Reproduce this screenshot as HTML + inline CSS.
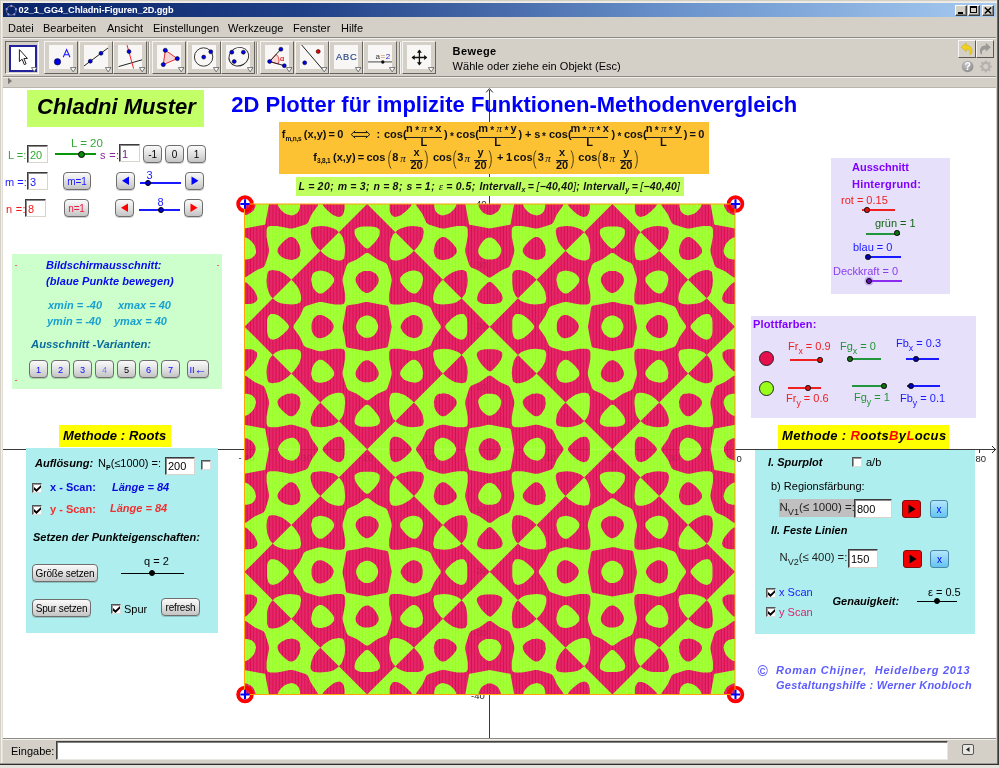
<!DOCTYPE html>
<html><head><meta charset="utf-8"><title>02_1_GG4_Chladni-Figuren_2D.ggb</title>
<style>
*{box-sizing:border-box;margin:0;padding:0}
html,body{width:999px;height:768px;overflow:hidden;background:#d4d0c8}
body{font-family:"Liberation Sans",sans-serif;font-size:11px;color:#000;position:relative}
.a{position:absolute;white-space:nowrap;line-height:1}
.bi{font-weight:bold;font-style:italic}
.b{font-weight:bold}
sub{font-size:80%;vertical-align:baseline;position:relative;top:3.5px;line-height:0}
/* window chrome */
#title{left:3px;top:3px;width:993px;height:14px;background:linear-gradient(90deg,#0a246a 0%,#1f3f86 30%,#6f97cf 70%,#a6caf0 100%)}
#title .t{left:15.6px;top:1.9px;color:#fff;font:bold 9.2px "Liberation Sans",sans-serif;letter-spacing:-.06px}
.wb{top:5px;width:12px;height:11px;background:#d4d0c8;border:1px solid;border-color:#fff #404040 #404040 #fff;box-shadow:inset -1px -1px 0 #808080}
#menu span{position:absolute;top:0;font-size:11px;line-height:1}
.tbtn{top:41px;width:34px;height:33px;border:1px solid;border-color:#f4f2ee #8a8780 #8a8780 #f4f2ee;background:#d4d0c8}
.tbtn i{position:absolute;left:4px;top:4px;width:24px;height:23px;background:#f6f5f3;display:block}
.tbtn svg{position:absolute;left:0;top:0}
.tbtn b{position:absolute;right:2px;bottom:2px;width:0;height:0;border-left:3.5px solid transparent;border-right:3.5px solid transparent;border-top:5px solid #fff;filter:drop-shadow(0 0 .6px #333) drop-shadow(0 0 .3px #333)}
/* canvas */
#cv{left:3px;top:88px;width:993px;height:650px;background:#fff;overflow:hidden}
#cv .a{ }
/* geogebra widgets */
.btn{border:1px solid #6e6e6e;border-radius:4px;background:linear-gradient(#fafafa 0%,#e4e4e4 45%,#c4c4c4 100%);text-align:center;font-size:10px;letter-spacing:-.15px;box-shadow:0 1px 0 rgba(0,0,0,.18)}
.inp{background:#fff;border:1px solid;border-color:#3c3c3c #d8d4cc #d8d4cc #3c3c3c;box-shadow:inset 1px 1px 0 #8a8a8a;font-size:11px;padding:4px 0 0 2px}
.cb{width:10px;height:10px;background:#fff;border:1px solid;border-color:#555 #ddd #ddd #555;box-shadow:inset 1px 1px 0 #999}
.cb.on:after{content:"";position:absolute;left:1px;top:1px;width:7px;height:7px;background:#000;clip-path:polygon(0% 30%,0% 68%,36% 100%,100% 34%,100% 0%,36% 62%)}
.sl{height:2px}
.dot{width:6px;height:6px;border-radius:50%;border:1px solid #000}
#w{position:absolute;left:0;top:0;width:999px;height:768px;will-change:transform}
</style></head><body><div id="w">

<!-- ===== window chrome ===== -->
<div class="a" style="left:1px;top:1px;width:996px;height:1px;background:#ebe8e0"></div><div class="a" style="left:1px;top:2px;width:996px;height:1px;background:#f1eee7"></div>
<div class="a" style="left:1px;top:1px;width:1px;height:762px;background:#f3f0e9"></div><div class="a" style="left:2px;top:2px;width:1px;height:761px;background:#e2dfd7"></div>
<div class="a" style="left:997px;top:0;width:1px;height:765px;background:#6a6864"></div>
<div class="a" style="left:998px;top:0;width:1px;height:765px;background:#3a3a3a"></div>
<div class="a" style="left:0;top:763px;width:997px;height:1px;background:#a09d97"></div>
<div class="a" style="left:0;top:764px;width:999px;height:1px;background:#2e2e2e"></div>
<div class="a" style="left:0;top:765px;width:999px;height:3px;background:#e6e3de"></div>

<div class="a" id="title">
  <svg class="a" style="left:2px;top:1px" width="13" height="13" viewBox="0 0 13 13"><ellipse cx="6.3" cy="6.5" rx="4.9" ry="4.6" fill="none" stroke="#777" stroke-width=".9"/><g fill="#9a9af0"><circle cx="6.3" cy="1.8" r="1.1"/><circle cx="1.7" cy="5.2" r="1.1"/><circle cx="10.9" cy="5.2" r="1.1"/><circle cx="3.4" cy="10.4" r="1.1"/><circle cx="9.3" cy="10.4" r="1.1"/></g></svg>
  <div class="a t">02_1_GG4_Chladni-Figuren_2D.ggb</div>
</div>
<div class="a wb" style="left:955px"><div class="a" style="left:2px;top:6px;width:5px;height:2px;background:#000"></div></div>
<div class="a wb" style="left:968px"><div class="a" style="left:1px;top:0px;width:7px;height:7px;border:1px solid #000;border-top-width:2px"></div></div>
<div class="a wb" style="left:982px"><svg class="a" style="left:1px;top:1px" width="8" height="7" viewBox="0 0 8 7"><path d="M.8 .5L7.2 6.5M7.2 .5L.8 6.5" stroke="#000" stroke-width="1.5"/></svg></div>


<!-- menu -->
<div class="a" id="menu" style="left:0;top:23px;width:999px;height:12px">
<span style="left:8px">Datei</span><span style="left:43px">Bearbeiten</span><span style="left:107px">Ansicht</span><span style="left:153px">Einstellungen</span><span style="left:228px">Werkzeuge</span><span style="left:293px">Fenster</span><span style="left:341px">Hilfe</span>
</div>
<div class="a" style="left:3px;top:37px;width:993px;height:1px;background:#8e8b85"></div>
<div class="a" style="left:3px;top:38px;width:993px;height:1px;background:#f0eeea"></div>

<div class="a" style="left:5px;top:41px;width:34px;height:33px;border:1px solid;border-color:#6a6862 #fbfaf8 #fbfaf8 #6a6862;background:#d4d0c8"><div class="a" style="left:3px;top:3px;width:28px;height:27px;border:2px solid #22229c;background:#fff"></div></div>
<svg class="a" style="left:5px;top:41px" width="34" height="33" viewBox="5 41 34 33"><path d="M19.4 49.6V61.6L22.1 59.2L24.3 64.6L26.1 63.8L23.9 58.6L27.4 58.4z" fill="#fff" stroke="#222" stroke-width="1" stroke-linejoin="miter"/><path d="M31.4 67.6h5.6l-2.8 4.2z" fill="#fff" stroke="#555" stroke-width=".8"/></svg>
<div class="a" style="left:44px;top:41px;width:34px;height:33px;border:1px solid;border-color:#f6f4f0 #66645e #66645e #f6f4f0;background:#d4d0c8"><div class="a" style="left:4px;top:3px;width:24px;height:24px;background:#f8f7f5"></div></div>
<svg class="a" style="left:44px;top:41px" width="34" height="33" viewBox="44 41 34 33"><circle cx="57.5" cy="61.8" r="3.2" fill="#0000e6" stroke="#000" stroke-width=".5"/><path d="M63.2 57.3L66.6 49.6L70 57.3M64.3 54.8H68.9" fill="none" stroke="#1a1aff" stroke-width="1.1"/><path d="M70.4 67.6h5.6l-2.8 4.2z" fill="#fff" stroke="#555" stroke-width=".8"/></svg>
<div class="a" style="left:79px;top:41px;width:34px;height:33px;border:1px solid;border-color:#f6f4f0 #66645e #66645e #f6f4f0;background:#d4d0c8"><div class="a" style="left:4px;top:3px;width:24px;height:24px;background:#f8f7f5"></div></div>
<svg class="a" style="left:79px;top:41px" width="34" height="33" viewBox="79 41 34 33"><path d="M84 66L108 48" stroke="#222" stroke-width="1"/><circle cx="90.3" cy="61.2" r="2" fill="#0000e6" stroke="#000" stroke-width=".5"/><circle cx="101" cy="53.3" r="2" fill="#0000e6" stroke="#000" stroke-width=".5"/><path d="M105.4 67.6h5.6l-2.8 4.2z" fill="#fff" stroke="#555" stroke-width=".8"/></svg>
<div class="a" style="left:113px;top:41px;width:34px;height:33px;border:1px solid;border-color:#f6f4f0 #66645e #66645e #f6f4f0;background:#d4d0c8"><div class="a" style="left:4px;top:3px;width:24px;height:24px;background:#f8f7f5"></div></div>
<svg class="a" style="left:113px;top:41px" width="34" height="33" viewBox="113 41 34 33"><path d="M118.6 66.6L142 59.8" stroke="#222" stroke-width="1"/><path d="M127 45L133.6 68.6" stroke="#f22" stroke-width="1"/><circle cx="129" cy="51.6" r="2" fill="#0000e6" stroke="#000" stroke-width=".5"/><path d="M139.4 67.6h5.6l-2.8 4.2z" fill="#fff" stroke="#555" stroke-width=".8"/></svg>
<div class="a" style="left:148px;top:42px;width:1px;height:32px;background:#8e8b85"></div><div class="a" style="left:149px;top:42px;width:1px;height:32px;background:#f6f4f0"></div>
<div class="a" style="left:152px;top:41px;width:34px;height:33px;border:1px solid;border-color:#f6f4f0 #66645e #66645e #f6f4f0;background:#d4d0c8"><div class="a" style="left:4px;top:3px;width:24px;height:24px;background:#f8f7f5"></div></div>
<svg class="a" style="left:152px;top:41px" width="34" height="33" viewBox="152 41 34 33"><path d="M165.3 50.3L177.3 58.6L163.3 64.6z" fill="#f6d6d6" stroke="#e03030" stroke-width="1"/><circle cx="165.3" cy="50.3" r="2.1" fill="#0000e6" stroke="#000" stroke-width=".5"/><circle cx="177.3" cy="58.6" r="2.1" fill="#0000e6" stroke="#000" stroke-width=".5"/><circle cx="163.3" cy="64.6" r="2.1" fill="#0000e6" stroke="#000" stroke-width=".5"/><path d="M178.4 67.6h5.6l-2.8 4.2z" fill="#fff" stroke="#555" stroke-width=".8"/></svg>
<div class="a" style="left:187px;top:41px;width:34px;height:33px;border:1px solid;border-color:#f6f4f0 #66645e #66645e #f6f4f0;background:#d4d0c8"><div class="a" style="left:4px;top:3px;width:24px;height:24px;background:#f8f7f5"></div></div>
<svg class="a" style="left:187px;top:41px" width="34" height="33" viewBox="187 41 34 33"><circle cx="203.6" cy="57" r="9.2" fill="none" stroke="#222" stroke-width=".9"/><circle cx="203.7" cy="57.1" r="2" fill="#0000e6" stroke="#000" stroke-width=".5"/><circle cx="210.8" cy="51.8" r="2" fill="#0000e6" stroke="#000" stroke-width=".5"/><path d="M213.4 67.6h5.6l-2.8 4.2z" fill="#fff" stroke="#555" stroke-width=".8"/></svg>
<div class="a" style="left:221px;top:41px;width:34px;height:33px;border:1px solid;border-color:#f6f4f0 #66645e #66645e #f6f4f0;background:#d4d0c8"><div class="a" style="left:4px;top:3px;width:24px;height:24px;background:#f8f7f5"></div></div>
<svg class="a" style="left:221px;top:41px" width="34" height="33" viewBox="221 41 34 33"><ellipse cx="238.8" cy="56.7" rx="10.2" ry="9" transform="rotate(-30 238.8 56.7)" fill="none" stroke="#222" stroke-width=".9"/><circle cx="231.8" cy="52.2" r="2" fill="#0000e6" stroke="#000" stroke-width=".5"/><circle cx="243.4" cy="52.2" r="2" fill="#0000e6" stroke="#000" stroke-width=".5"/><circle cx="234.2" cy="61.5" r="2" fill="#0000e6" stroke="#000" stroke-width=".5"/><path d="M247.4 67.6h5.6l-2.8 4.2z" fill="#fff" stroke="#555" stroke-width=".8"/></svg>
<div class="a" style="left:256px;top:42px;width:1px;height:32px;background:#8e8b85"></div><div class="a" style="left:257px;top:42px;width:1px;height:32px;background:#f6f4f0"></div>
<div class="a" style="left:260px;top:41px;width:34px;height:33px;border:1px solid;border-color:#f6f4f0 #66645e #66645e #f6f4f0;background:#d4d0c8"><div class="a" style="left:4px;top:3px;width:24px;height:24px;background:#f8f7f5"></div></div>
<svg class="a" style="left:260px;top:41px" width="34" height="33" viewBox="260 41 34 33"><path d="M269.6 61.5L276.2 54.2A9 9 0 0 1 278.2 64z" fill="#f8d8d8" stroke="#e03030" stroke-width=".9"/><path d="M280.9 49.2L269.6 61.5L284.3 65.7" fill="none" stroke="#222" stroke-width="1"/><circle cx="280.9" cy="49.2" r="2" fill="#0000e6" stroke="#000" stroke-width=".5"/><circle cx="269.6" cy="61.5" r="2" fill="#0000e6" stroke="#000" stroke-width=".5"/><circle cx="284.3" cy="65.7" r="2" fill="#0000e6" stroke="#000" stroke-width=".5"/><text x="280" y="60.5" font-family="Liberation Sans" font-size="7.5" fill="#e02020" stroke="#e02020" stroke-width=".2">&#945;</text><path d="M286.4 67.6h5.6l-2.8 4.2z" fill="#fff" stroke="#555" stroke-width=".8"/></svg>
<div class="a" style="left:295px;top:41px;width:34px;height:33px;border:1px solid;border-color:#f6f4f0 #66645e #66645e #f6f4f0;background:#d4d0c8"><div class="a" style="left:4px;top:3px;width:24px;height:24px;background:#f8f7f5"></div></div>
<svg class="a" style="left:295px;top:41px" width="34" height="33" viewBox="295 41 34 33"><path d="M301.7 45L322.3 69" stroke="#222" stroke-width="1"/><circle cx="318.2" cy="51.5" r="2" fill="#e60000" stroke="#000" stroke-width=".5"/><circle cx="304.7" cy="62.8" r="2" fill="#0000e6" stroke="#000" stroke-width=".5"/><path d="M321.4 67.6h5.6l-2.8 4.2z" fill="#fff" stroke="#555" stroke-width=".8"/></svg>
<div class="a" style="left:329px;top:41px;width:34px;height:33px;border:1px solid;border-color:#f6f4f0 #66645e #66645e #f6f4f0;background:#d4d0c8"><div class="a" style="left:4px;top:3px;width:24px;height:24px;background:#f8f7f5"></div></div>
<svg class="a" style="left:329px;top:41px" width="34" height="33" viewBox="329 41 34 33"><text x="336" y="60.1" font-family="Liberation Sans" font-size="9.3" letter-spacing=".8" fill="#2f4c86" stroke="#2f4c86" stroke-width=".2">ABC</text><path d="M355.4 67.6h5.6l-2.8 4.2z" fill="#fff" stroke="#555" stroke-width=".8"/></svg>
<div class="a" style="left:363px;top:41px;width:34px;height:33px;border:1px solid;border-color:#f6f4f0 #66645e #66645e #f6f4f0;background:#d4d0c8"><div class="a" style="left:4px;top:3px;width:24px;height:24px;background:#f8f7f5"></div></div>
<svg class="a" style="left:363px;top:41px" width="34" height="33" viewBox="363 41 34 33"><text x="375.5" y="59.2" font-family="Liberation Sans" font-size="8" letter-spacing=".5" fill="#333">a<tspan fill="#c08020">=</tspan><tspan fill="#1a1acc">2</tspan></text><path d="M368 61.9H392" stroke="#666" stroke-width="1.2"/><circle cx="382.8" cy="62" r="1.7" fill="#111"/><path d="M389.4 67.6h5.6l-2.8 4.2z" fill="#fff" stroke="#555" stroke-width=".8"/></svg>
<div class="a" style="left:399px;top:42px;width:1px;height:32px;background:#8e8b85"></div><div class="a" style="left:400px;top:42px;width:1px;height:32px;background:#f6f4f0"></div>
<div class="a" style="left:402px;top:41px;width:34px;height:33px;border:1px solid;border-color:#f6f4f0 #66645e #66645e #f6f4f0;background:#d4d0c8"><div class="a" style="left:4px;top:3px;width:24px;height:24px;background:#f8f7f5"></div></div>
<svg class="a" style="left:402px;top:41px" width="34" height="33" viewBox="402 41 34 33"><path d="M412.5 57.5H426.3M419.4 50.6V64.4" stroke="#111" stroke-width="1.3"/><path d="M419.4 49.6L416.9 52.8H421.9zM419.4 65.4L416.9 62.2H421.9zM411.5 57.5L414.7 55V60zM427.3 57.5L424.1 55V60z" fill="#111"/><path d="M428.4 67.6h5.6l-2.8 4.2z" fill="#fff" stroke="#555" stroke-width=".8"/></svg>
<div class="a b" style="left:452.6px;top:46px;font-size:11px;letter-spacing:.4px">Bewege</div>
<div class="a" style="left:452.6px;top:61px;font-size:11px;letter-spacing:.04px">Wähle oder ziehe ein Objekt (Esc)</div>
<div class="a" style="left:958px;top:40px;width:18px;height:18px;border:1px solid;border-color:#f8f6f2 #5a5852 #5a5852 #f8f6f2;background:#d4d0c8"><svg class="a" style="left:1px;top:1px" width="14" height="14" viewBox="0 0 14 14"><path d="M1.2 5.2L6.2 .8V3.6C10.5 3.4 12.4 6.2 12 10.6C11.8 11.8 10.6 12.6 9.6 12.4C10.6 10.6 10.2 7.2 6.2 7.2V9.8z" fill="#f2d21c" stroke="#c8a800" stroke-width=".5"/></svg></div>
<div class="a" style="left:976px;top:40px;width:18px;height:18px;border:1px solid;border-color:#f8f6f2 #5a5852 #5a5852 #f8f6f2;background:#d4d0c8"><svg class="a" style="left:1px;top:1px" width="14" height="14" viewBox="0 0 14 14"><path d="M12.8 5.2L7.8 .8V3.6C3.5 3.4 1.6 6.2 2 10.6C2.2 11.8 3.4 12.6 4.4 12.4C3.4 10.6 3.8 7.2 7.8 7.2V9.8z" fill="#9c9a96"/></svg></div>
<svg class="a" style="left:960px;top:59px" width="34" height="15" viewBox="960 59 34 15"><defs><radialGradient id="hg" cx=".4" cy=".35" r=".7"><stop offset="0" stop-color="#c8c8c8"/><stop offset="1" stop-color="#8a8a8a"/></radialGradient></defs><circle cx="967.6" cy="66.5" r="5.8" fill="url(#hg)"/><text x="964.6" y="70.3" font-family="Liberation Sans" font-size="10.5" font-weight="bold" fill="#fff">?</text><g transform="translate(985.8 66.5)" fill="none" stroke="#b4b2ae"><circle r="3.6" stroke-width="2.2"/><path d="M0-6V-4M0 4V6M-6 0H-4M4 0H6M-4.3-4.3L-2.9-2.9M4.3 4.3L2.9 2.9M-4.3 4.3L-2.9 2.9M4.3-4.3L2.9-2.9" stroke-width="2"/></g></svg>
<div class="a" style="left:3px;top:76px;width:993px;height:1px;background:#8e8b85"></div><div class="a" style="left:3px;top:77px;width:993px;height:1px;background:#f0eeea"></div>
<svg class="a" style="left:7px;top:77.3px" width="6" height="8" viewBox="0 0 6 8"><path d="M1 .8V7.2L5 4z" fill="#777"/></svg>
<div class="a" style="left:3px;top:87px;width:993px;height:1px;background:#b8b5ae"></div>


<!-- ===== canvas ===== -->
<div class="a" id="cv">
<div class="a" style="left:-3px;top:-88px;width:999px;height:768px">

<!-- axes -->
<div class="a" style="left:3px;top:449px;width:993px;height:1px;background:#3a3a3a"></div>
<div class="a" style="left:489px;top:90px;width:1px;height:648px;background:#3a3a3a"></div>
<svg class="a" style="left:484px;top:88px" width="11" height="8" viewBox="0 0 11 8"><path d="M2.2 4.4L5.5 .6L8.8 4.4" fill="none" stroke="#222" stroke-width="1"/></svg>
<svg class="a" style="left:988px;top:444px" width="8" height="11" viewBox="0 0 8 11"><path d="M4 2L7.6 5.5L4 9" fill="none" stroke="#222" stroke-width="1"/></svg><div class="a" style="left:979px;top:450px;width:1px;height:3px;background:#333"></div>
<div class="a" style="left:975.5px;top:454px;font-size:9.5px;color:#222">80</div>
<div class="a" style="left:736.5px;top:454px;font-size:9.5px;color:#222">0</div>
<div class="a" style="left:238.5px;top:453px;font-size:9.5px;color:#222">-</div>
<div class="a" style="left:476px;top:198.5px;font-size:9.5px;color:#222">40</div>
<div class="a" style="left:471px;top:690.5px;font-size:9.5px;color:#222">-40</div>

<!-- title -->
<div class="a" style="left:27px;top:90px;width:177px;height:37px;background:#c3ff66"></div>
<div class="a bi" style="left:37px;top:96px;font-size:22px">Chladni Muster</div>
<div class="a b" style="left:231.3px;top:94px;font-size:22px;color:#0000f8">2D Plotter für implizite Funktionen-Methodenvergleich</div>

<div class="a" style="left:279px;top:122px;width:430px;height:52px;background:#fdc233"></div>
<div class="a" style="left:296px;top:177px;width:388px;height:19px;background:#bfff60"></div>
<div class="b" style="color:#111">
<div class="a" style="left:281.8px;top:129.1px;font-size:11px;">f</div>
<div class="a" style="left:285.5px;top:135.5px;font-size:6.5px;letter-spacing:-.2px">m,n,s</div>
<div class="a" style="left:303.8px;top:129.1px;font-size:11px;">(x,y)&#8201;=&#8201;0</div>
<svg class="a" style="left:350px;top:130px" width="21" height="9" viewBox="0 0 21 9"><path d="M4 2.6H17M4 6.4H17M5.2 .8L1.2 4.5L5.2 8.2M15.8 .8L19.8 4.5L15.8 8.2" fill="none" stroke="#111" stroke-width="1"/></svg>
<div class="a" style="left:376.5px;top:129.1px;font-size:11px;">:</div>
<div class="a" style="left:384.0px;top:129.1px;font-size:11px;">cos(</div>
<div class="a" style="left:393.8px;width:60px;text-align:center;top:121.9px;font-size:11px;">n<span style="font-size:10px;position:relative;top:2px;margin:0 2.3px">*</span><span style="font:italic 11px 'Liberation Serif',serif">&#960;</span><span style="font-size:10px;position:relative;top:2px;margin:0 2.3px">*</span>x</div>
<div class="a" style="left:405.3px;top:137.4px;width:37.0px;height:1px;background:#222"></div>
<div class="a" style="left:393.8px;width:60px;text-align:center;top:136.5px;font-size:11px;">L</div>
<div class="a" style="left:444.0px;top:129.1px;font-size:11px;">)</div>
<div class="a" style="left:450.0px;top:132.4px;font-size:10px;">*</div>
<div class="a" style="left:456.3px;top:129.1px;font-size:11px;">cos(</div>
<div class="a" style="left:467.5px;width:60px;text-align:center;top:121.9px;font-size:11px;">m<span style="font-size:10px;position:relative;top:2px;margin:0 2.3px">*</span><span style="font:italic 11px 'Liberation Serif',serif">&#960;</span><span style="font-size:10px;position:relative;top:2px;margin:0 2.3px">*</span>y</div>
<div class="a" style="left:479.0px;top:137.4px;width:37.0px;height:1px;background:#222"></div>
<div class="a" style="left:467.5px;width:60px;text-align:center;top:136.5px;font-size:11px;">L</div>
<div class="a" style="left:518.6px;top:129.1px;font-size:11px;">)</div>
<div class="a" style="left:525.0px;top:129.1px;font-size:11px;">+</div>
<div class="a" style="left:534.3px;top:129.1px;font-size:11px;">s</div>
<div class="a" style="left:542.0px;top:132.4px;font-size:10px;">*</div>
<div class="a" style="left:549.0px;top:129.1px;font-size:11px;">cos(</div>
<div class="a" style="left:559.7px;width:60px;text-align:center;top:121.9px;font-size:11px;">m<span style="font-size:10px;position:relative;top:2px;margin:0 2.3px">*</span><span style="font:italic 11px 'Liberation Serif',serif">&#960;</span><span style="font-size:10px;position:relative;top:2px;margin:0 2.3px">*</span>x</div>
<div class="a" style="left:571.2px;top:137.4px;width:37.0px;height:1px;background:#222"></div>
<div class="a" style="left:559.7px;width:60px;text-align:center;top:136.5px;font-size:11px;">L</div>
<div class="a" style="left:611.5px;top:129.1px;font-size:11px;">)</div>
<div class="a" style="left:617.5px;top:132.4px;font-size:10px;">*</div>
<div class="a" style="left:624.0px;top:129.1px;font-size:11px;">cos(</div>
<div class="a" style="left:633.4px;width:60px;text-align:center;top:121.9px;font-size:11px;">n<span style="font-size:10px;position:relative;top:2px;margin:0 2.3px">*</span><span style="font:italic 11px 'Liberation Serif',serif">&#960;</span><span style="font-size:10px;position:relative;top:2px;margin:0 2.3px">*</span>y</div>
<div class="a" style="left:644.9px;top:137.4px;width:37.0px;height:1px;background:#222"></div>
<div class="a" style="left:633.4px;width:60px;text-align:center;top:136.5px;font-size:11px;">L</div>
<div class="a" style="left:683.7px;top:129.1px;font-size:11px;">)&#8201;=&#8201;0</div>
<div class="a" style="left:313.3px;top:151.5px;font-size:11px;">f</div>
<div class="a" style="left:317.0px;top:157.9px;font-size:6.5px;letter-spacing:-.2px">3,8,1</div>
<div class="a" style="left:333.0px;top:151.5px;font-size:11px;">(x,y)&#8201;=&#8201;cos</div>
<svg class="a" style="left:386.5px;top:150px" width="5" height="19" viewBox="0 0 5 19"><path d="M4 .5C1 5 1 14 4 18.5" fill="none" stroke="#4a3a10" stroke-width="1"/></svg>
<div class="a" style="left:392.3px;top:151.5px;font-size:11px;">8</div>
<div class="a" style="left:400.3px;top:151.5px;font-size:11px;"><span style="font:italic 11px 'Liberation Serif',serif">&#960;</span></div>
<div class="a" style="left:386.5px;width:60px;text-align:center;top:146.7px;font-size:11px;">x</div>
<div class="a" style="left:410.3px;top:159.6px;width:12.4px;height:1px;background:#222"></div>
<div class="a" style="left:386.5px;width:60px;text-align:center;top:159.9px;font-size:11px;">20</div>
<svg class="a" style="left:423.6px;top:150px" width="5" height="19" viewBox="0 0 5 19"><path d="M1 .5C4 5 4 14 1 18.5" fill="none" stroke="#4a3a10" stroke-width="1"/></svg>
<div class="a" style="left:433.0px;top:151.5px;font-size:11px;">cos</div>
<svg class="a" style="left:452.0px;top:150px" width="5" height="19" viewBox="0 0 5 19"><path d="M4 .5C1 5 1 14 4 18.5" fill="none" stroke="#4a3a10" stroke-width="1"/></svg>
<div class="a" style="left:457.3px;top:151.5px;font-size:11px;">3</div>
<div class="a" style="left:464.5px;top:151.5px;font-size:11px;"><span style="font:italic 11px 'Liberation Serif',serif">&#960;</span></div>
<div class="a" style="left:450.6px;width:60px;text-align:center;top:146.7px;font-size:11px;">y</div>
<div class="a" style="left:474.4px;top:159.6px;width:12.4px;height:1px;background:#222"></div>
<div class="a" style="left:450.6px;width:60px;text-align:center;top:159.9px;font-size:11px;">20</div>
<svg class="a" style="left:488.4px;top:150px" width="5" height="19" viewBox="0 0 5 19"><path d="M1 .5C4 5 4 14 1 18.5" fill="none" stroke="#4a3a10" stroke-width="1"/></svg>
<div class="a" style="left:497.0px;top:151.5px;font-size:11px;">+</div>
<div class="a" style="left:506.0px;top:151.5px;font-size:11px;">1</div>
<div class="a" style="left:513.6px;top:151.5px;font-size:11px;">cos</div>
<svg class="a" style="left:532.0px;top:150px" width="5" height="19" viewBox="0 0 5 19"><path d="M4 .5C1 5 1 14 4 18.5" fill="none" stroke="#4a3a10" stroke-width="1"/></svg>
<div class="a" style="left:537.8px;top:151.5px;font-size:11px;">3</div>
<div class="a" style="left:545.2px;top:151.5px;font-size:11px;"><span style="font:italic 11px 'Liberation Serif',serif">&#960;</span></div>
<div class="a" style="left:532.0px;width:60px;text-align:center;top:146.7px;font-size:11px;">x</div>
<div class="a" style="left:555.8px;top:159.6px;width:12.4px;height:1px;background:#222"></div>
<div class="a" style="left:532.0px;width:60px;text-align:center;top:159.9px;font-size:11px;">20</div>
<svg class="a" style="left:569.6px;top:150px" width="5" height="19" viewBox="0 0 5 19"><path d="M1 .5C4 5 4 14 1 18.5" fill="none" stroke="#4a3a10" stroke-width="1"/></svg>
<div class="a" style="left:578.3px;top:151.5px;font-size:11px;">cos</div>
<svg class="a" style="left:596.6px;top:150px" width="5" height="19" viewBox="0 0 5 19"><path d="M4 .5C1 5 1 14 4 18.5" fill="none" stroke="#4a3a10" stroke-width="1"/></svg>
<div class="a" style="left:602.2px;top:151.5px;font-size:11px;">8</div>
<div class="a" style="left:609.6px;top:151.5px;font-size:11px;"><span style="font:italic 11px 'Liberation Serif',serif">&#960;</span></div>
<div class="a" style="left:596.3px;width:60px;text-align:center;top:146.7px;font-size:11px;">y</div>
<div class="a" style="left:620.1px;top:159.6px;width:12.4px;height:1px;background:#222"></div>
<div class="a" style="left:596.3px;width:60px;text-align:center;top:159.9px;font-size:11px;">20</div>
<svg class="a" style="left:634.0px;top:150px" width="5" height="19" viewBox="0 0 5 19"><path d="M1 .5C4 5 4 14 1 18.5" fill="none" stroke="#4a3a10" stroke-width="1"/></svg>
</div>
<div class="a" style="left:298.6px;top:179.5px;font-size:10.5px;font-style:italic;font-weight:bold;letter-spacing:.55px;color:#111">L&#8201;=&#8201;20; m&#8201;=&#8201;3; n&#8201;=&#8201;8; s&#8201;=&#8201;1; <span style="font:italic 11px 'Liberation Serif',serif">&#949;</span>&#8201;=&#8201;0.5; <span style="letter-spacing:.2px">Intervall<span style="font-size:7px;position:relative;top:2px">x</span>&#8201;=&#8201;<span style="font-weight:normal">[</span>&#8722;40,40<span style="font-weight:normal">]</span>; Intervall<span style="font-size:7px;position:relative;top:2px">y</span>&#8201;=&#8201;<span style="font-weight:normal">[</span>&#8722;40,40<span style="font-weight:normal">]</span></span></div>


<!-- pattern -->
<svg class="a" style="left:234px;top:193px" width="512.5" height="512.5" viewBox="-10.5 -11 512 512">
<defs><path id="pp" d="M1.5 11l-1.5 0 0-11 11 0 0 2-0.5 1.5-1 2-1 1.5-2 1.5-1.5 1-2 1zM1.5 73l-1.5 0.5 0-18 2.5 0 2-0.5 2-0.5 2-1.5 1.5-1.5 1-1.5 0.5-1.5 0-2-0.5-2-0.5-2-1-2-2-2.5-2-2-2-1.5-2-1-1.5 0 0-9 2.5-0.5 8-1.5 8-1.5 1 0 1-0.5 0.5-1 0-1 1.5-8 1.5-8 0.5-2.5 9 0 0 1.5 1 2 1.5 2 2.5 2.5 2 1.5 2.5 1 2 0.5 2 0.5 2-0.5 1.5-0.5 1.5-1 1.5-1.5 1-1.5 0.5-2 0.5-2 0-2.5 18 0 0 1-0.5 1-4 5.5-2 3-3.5 8-1 1-1.5 1-11 3.5-2.5 0.5-2.5 0-7-1.5-6-1-6.5 0-1.5 0.5-1 0.5-0.5 1-0.5 2 0 6.5 1 5.5 1.5 7 0 2.5-0.5 2.5-3.5 11-1 1.5-1 1-6 2.5-2.5 1.5zM96 12.5l-2 0.5-2-0.5-2.5-1-2.5-1.5-3.5-3-3-3-2-2.5-0.5-1.5 22 0 0 5-1 4-1 2-1 1zM152.5 12.5l-2 0.5-1.5-0.5-1.5-1-1-1-1-2-0.5-2 0-3 0-3.5 22 0-0.5 1.5-1 1.5-2 2-2.5 2.5-4.5 3.5-2 1zM246.5 73l-1.5 0.5-1 0-1-0.5-8-5.5-2.5-1.5-6-2.5-1-1-1-1.5-3.5-11-0.5-2.5 0-2.5 1.5-7 1-6 0-6.5-0.5-1.5-0.5-1-1-0.5-2-0.5-6.5 0-5.5 1-7 1.5-2.5 0-2.5-0.5-11-3.5-1.5-1-1-1-3.5-8-2-3-4-5.5-0.5-1 0-1 18 0 0 2.5 0.5 2 0.5 2 1 1.5 1.5 1.5 1.5 1 1.5 0.5 2 0.5 2-0.5 2-0.5 2.5-1 2-1.5 2.5-2.5 1.5-2 1-2 0-1.5 9 0 0.5 2.5 1.5 8 1.5 8 0 1 0.5 1 1 0.5 1 0 8 1.5 8 1.5 2.5 0.5 2.5-0.5 8-1.5 8-1.5 1 0 1-0.5 0.5-1 0-1 1.5-8 1.5-8 0.5-2.5 9 0 0 1.5 1 2 1.5 2 2.5 2.5 2 1.5 2.5 1 2 0.5 2 0.5 2-0.5 1.5-0.5 1.5-1 1.5-1.5 1-1.5 0.5-2 0.5-2 0-2.5 18 0 0 1-0.5 1-4 5.5-2 3-3.5 8-1 1-1.5 1-11 3.5-2.5 0.5-2.5 0-7-1.5-6-1-6.5 0-1.5 0.5-1 0.5-0.5 1-0.5 2 0 6.5 1 5.5 1.5 7 0 2.5-0.5 2.5-3.5 11-1 1.5-1 1-6 2.5-2.5 1.5zM246.5 11l-2 0-2.5-0.5-2-1-2-1-1.5-2-1.5-2-1-2 0-2.5 22 0 0 2-0.5 1.5-1 2-1 1.5-2 1.5-1.5 1-2 1zM341 12.5l-2 0.5-2-0.5-2.5-1-2.5-1.5-3.5-3-3-3-2-2.5-0.5-1.5 22 0 0 5-1 4-1 2-1 1zM397.5 12.5l-2 0.5-1.5-0.5-1.5-1-1-1-1-2-0.5-2 0-3 0-3.5 22 0-0.5 1.5-1 1.5-2 2-2.5 2.5-4.5 3.5-2 1zM490 73.5l-1 0-1-0.5-5.5-4-3-2-8-3.5-1-1-1-1.5-3.5-11-0.5-2.5 0-2.5 1.5-7 1-5.5 0-6.5-0.5-2-0.5-1-1-0.5-1.5-0.5-6.5 0-6 1-7 1.5-2.5 0-2.5-0.5-11-3.5-1.5-1-1-1-3.5-8-2-3-4-5.5-0.5-1 0-1 18 0 0 2.5 0.5 2 0.5 2 1 1.5 1.5 1.5 1.5 1 1.5 0.5 2 0.5 2-0.5 2-0.5 2.5-1 2-1.5 2.5-2.5 1.5-2 1-2 0-1.5 9 0 0.5 2.5 1.5 8 1.5 8 0 1 0.5 1 1 0.5 1 0 8 1.5 8 1.5 2.5 0.5 0 9-1.5 0-2 1-2 1.5-2.5 2.5-1.5 2-1 2.5-0.5 2-0.5 2 0.5 2 0.5 1.5 1 1.5 1.5 1.5 1.5 1 2 0.5 2 0.5 2.5 0zM490 11l-2 0-2-1-2-1-1.5-1-1.5-2-1-2-1-2 0-2 11 0zM368 244.5l-0.5 0.5-28-28-0.5 0-2 2-3 1.5-3 1-3.5 1-5.5 0.5-5-0.5-3-0.5-1-0.5-1-0.5-0.5-1.5-0.5-2.5 0.5-3 0.5-3.5 1.5-3 1.5-2.5 2.5-3.5 3-3 0-0.5 19 19 0-0.5 2-2 1.5-3 1-2.5 0.5-3 0.5-5 0-5 0-3.5-1-2-0.5-1-1-0.5-2-0.5-3.5 0-3.5 1-3 1-3 2-3.5 2.5-3 3-0.5 0-28.5-28.5-0.5 0-3 3-3.5 2.5-2.5 1.5-2.5 1-3 1-3 0.5-2.5 0-2-1-1-0.5-0.5-1-0.5-3-0.5-5 0.5-5.5 1-3.5 0.5-3 1.5-2.5 1.5-2 1-1 0-0.5-28-28-28 28 0 0.5 2 2 1.5 3 1 3 1 3.5 0.5 5.5-0.5 5-0.5 3-0.5 1-0.5 1-1.5 0.5-2.5 0.5-3-0.5-3.5-0.5-3-1.5-2.5-1.5-3.5-2.5-3-3-0.5 0-28.5 28.5 0 0.5 3 3 2.5 3.5 1.5 2.5 1.5 3 0.5 3.5 0.5 3-0.5 2.5-0.5 1.5-1 0.5-1 0.5-3 0.5-5 0.5-5.5-0.5-3.5-1-3-1-3-1.5-2-2-0.5 0-28 28-28-28 0-0.5 1-1 1.5-2 1.5-2.5 1-3.5 0.5-4 0.5-5.5-0.5-5-1-2.5-0.5-1-1-0.5-2-0.5-2.5 0-3 0.5-3 1-2.5 1-3 2-3 2.5-2.5 2.5-0.5 0 19 19-0.5 0-1 1-2 1.5-2.5 1.5-3 0.5-3.5 1-5.5 0.5-5-0.5-3-0.5-1-0.5-0.5-1-1-2 0-2.5 0.5-3 1-3 1-2.5 1.5-2.5 2.5-3.5 3-3 0-0.5-28.5-28.5 0-0.5 3-3 2.5-3.5 2-3 1-3 1-3.5 0-3.5-0.5-2-0.5-1-1-0.5-2-1-3.5 0-5 0-5 0.5-3 0.5-2.5 1-3 1.5-2 2-0.5 0 19 19-0.5 0-3 3-3.5 2.5-2.5 1.5-3 1.5-3.5 0.5-3 0.5-2.5-0.5-1.5-0.5-0.5-1-0.5-1-0.5-3-0.5-5 0.5-5.5 1-3.5 1-3 1.5-3 2-2 0-0.5-28-28 28-28 0.5 0 1 1 2 1.5 2.5 1.5 3.5 1 4 0.5 5.5 0.5 5-0.5 2.5-1 1-0.5 0.5-1 0.5-2 0-2.5-0.5-3-1-3-1-2.5-2-3-2.5-3-2.5-2.5 0-0.5-19 19 0-0.5-2-2-1.5-3-1-3-1-3.5-0.5-5.5 0.5-5 0.5-3 0.5-1 0.5-1 1.5-0.5 2.5-0.5 3 0.5 3.5 0.5 3 1.5 2.5 1.5 3.5 2.5 3 3 0.5 0 28.5-28.5 0.5 0 3 3 3.5 2.5 2.5 1.5 2.5 1 3 1 3 0.5 2.5 0 2-1 1-0.5 0.5-1 0.5-3 0.5-5-0.5-5.5-1-3.5-0.5-3-1.5-2.5-1.5-2-1-1 0-0.5 28-28 28 28 0.5 0 2-2 3-1.5 3-1 3.5-1 5.5-0.5 5 0.5 3 0.5 1 0.5 1 0.5 0.5 1.5 0.5 2.5-0.5 3-0.5 3.5-1.5 3-1.5 2.5-2.5 3.5-3 3 0 0.5-19-19 0 0.5-2 2-1.5 3-1 2.5-0.5 3-0.5 5 0 5 0 3.5 1 2 0.5 1 1 0.5 2 0.5 3.5 0 3.5-1 3-1 3-2 3.5-2.5 3-3 0.5 0 28.5 28.5 0.5 0 3-3 3.5-2.5 2.5-1.5 2.5-1 3-1 3-0.5 2.5 0 2 1 1 0.5 0.5 1 0.5 3 0.5 5-0.5 5.5-1 3.5-0.5 3-1.5 2.5-1.5 2-1 1 0 0.5-19-19 0 0.5-2.5 2.5-2.5 3-2 3-1 2.5-1 3-0.5 3 0 2.5 0.5 2 0.5 1 1 0.5 2.5 1 5 0.5 5.5-0.5 4-0.5 3.5-1 2.5-1.5 2-1.5 1-1 0.5 0 28 28 28-28 0.5 0 2 2 3 1.5 3 1 3.5 1 5.5 0.5 5-0.5 3-0.5 1-0.5 1-0.5 0.5-1.5 0.5-2.5-0.5-3-0.5-3.5-1.5-3-1.5-2.5-2.5-3.5-3-3 0-0.5-19 19 0-0.5-2-2-1.5-3-1-2.5-0.5-3-0.5-5 0-5 0-3.5 1-2 0.5-1 1-0.5 2-0.5 3.5 0 3.5 1 3 1 3 2 3.5 2.5 3 3 0.5 0 28.5-28.5 0.5 0 3 3 3.5 2.5 2.5 1.5 2.5 1 3 1 3 0.5 2.5 0 2-1 1-0.5 0.5-1 0.5-3 0.5-5-0.5-5.5-1-3.5-0.5-3-1.5-2.5-1.5-2-1-1 0-0.5 28-28 28 28 0 0.5-2 2-1.5 3-1 3-1 3.5-0.5 5.5 0.5 5 0.5 3 0.5 1 0.5 1 1.5 0.5 2.5 0.5 3-0.5 3.5-0.5 3-1.5 2.5-1.5 3.5-2.5 3-3 0.5 0 28.5 28.5 0.5 0 3-3 3.5-2.5 2.5-1.5 2.5-1 3-1 3-0.5 2.5 0 2 1 1 0.5 0.5 1 0.5 3 0.5 5-0.5 5.5-1 3.5-0.5 3-1.5 2.5-1.5 2-1 1 0 0.5-19-19 0 0.5-2.5 2.5-2.5 3-2 3-1 2.5-1 3-0.5 3 0 2.5 0.5 2 0.5 1 1 0.5 2.5 1 5 0.5 5.5-0.5 4-0.5 3.5-1 2.5-1.5 2-1.5 1-1 0.5 0 28 28-28 28-0.5 0-2-2-3-1.5-3-1-3.5-1-5.5-0.5-5 0.5-3 0.5-1 0.5-1 0.5-0.5 1.5-0.5 2.5 0.5 3 0.5 3.5 1.5 3 1.5 2.5 2.5 3.5 3 3 0 0.5-28.5 28.5 0 0.5 3 3 2.5 3.5 1.5 2.5 1 2.5 1 3 0.5 3 0 2.5-1 2-0.5 1-1 0.5-3 0.5-5 0.5-5.5-0.5-3.5-1-3-0.5-2.5-1.5-2-1.5-1-1-0.5 0 19-19-0.5 0-2.5-2.5-3-2.5-3-2-2.5-1-3-1-3-0.5-2.5 0-2 0.5-1 0.5-0.5 1-1 2.5-0.5 5 0.5 5.5 0.5 4 1 3.5 1.5 2.5 1.5 2 1 1 0 0.5zM75.5 47l0-0.5-3-3-2.5-3.5-1.5-2.5-1.5-3-0.5-3.5-0.5-3 0.5-2.5 0.5-1.5 1-0.5 1-0.5 3-0.5 5-0.5 5.5 0.5 3.5 1 3 1 3 1.5 2 2 0.5 0zM123 44.5l1.5-0.5 3-3 3-3 2.5-3.5 1.5-2.5 0.5-2.5 0-2 0-1.5-1.5-1.5-1.5-1-2-0.5-3-0.5-4 0-4.5 0-3.5 0.5-2.5 1-1.5 1-1 1 0 1 0 2.5 1 3 2.5 4 4 4.5 2 2 1.5 1 1 0.5zM321 46.5l-0.5 0.5 0-0.5-2-2-2.5-3-2.5-3.5-1-3-1-3.5-0.5-3 0-2.5 0.5-1 0.5-1 1-0.5 1-0.5 3-0.5 5-0.5 5.5 0.5 3.5 1 3 1 3 1.5 2 2 0.5 0zM368 44.5l1.5-0.5 3-3 3-3 2.5-3.5 1.5-2.5 0.5-2.5 0-2 0-1.5-1.5-1.5-1.5-1-2-0.5-3-0.5-4 0-4.5 0-3.5 0.5-2.5 1-1.5 1-1 1 0 1 0 2.5 1 3 2.5 4 4 4.5 2 2 1.5 1 1 0.5zM414.5 47l-19-19 0.5 0 2-2 3-1.5 3-1 3.5-1 5.5-0.5 5 0.5 3 0.5 1 0.5 1 0.5 0.5 1.5 0.5 2.5-0.5 3-0.5 3.5-1.5 3-1.5 2.5-2.5 3.5-3 3zM49.5 55.5l-2.5 0.5-3-0.5-2.5-0.5-2.5-1-2.5-1.5-1.5-1.5-1.5-2-0.5-1.5 0-1.5 0.5-2 1.5-2 1.5-2 3-3 2.5-2 2-1.5 2-0.5 1.5 0 1.5 0.5 1.5 1 1.5 1.5 1 1.5 1 2 1 2 0.5 2.5 0.5 2.5-0.5 2 0 2-0.5 1.5-1.5 1.5-1 1-1.5 0.5zM201.5 55.5l-2.5 0.5-2 0-2-0.5-2-0.5-1.5-1.5-1-1-0.5-1.5-0.5-1.5-0.5-2.5 0.5-3 0.5-2.5 1-2.5 1.5-2.5 1.5-1.5 2-1.5 1.5-0.5 1.5 0 2 0.5 2 1.5 2 1.5 3 3 2 2.5 1.5 2 0.5 2 0 1 0 1.5-1 1.5-1.5 1.5-1.5 1.5-2 1-2 1zM294.5 55.5l-2.5 0.5-3-0.5-2.5-0.5-2.5-1-2.5-1.5-1.5-1.5-1.5-2-0.5-1.5 0-1.5 0.5-2 1.5-2 1.5-2 3-3 2.5-2 2-1.5 2-0.5 1.5 0 1.5 0.5 1.5 1 1.5 1.5 1 1.5 1 2 1 2 0.5 2.5 0.5 2.5-0.5 2 0 2-0.5 1.5-1.5 1.5-1 1-1.5 0.5zM446.5 55.5l-2.5 0.5-2 0-2-0.5-2-0.5-1.5-1.5-1-1-0.5-1.5-0.5-1.5-0.5-2.5 0.5-3 0.5-2.5 1-2.5 1.5-2.5 1.5-1.5 2-1.5 1.5-0.5 1.5 0 2 0.5 2 1.5 2 1.5 3 3 2 2.5 1.5 2 0.5 2 0 1 0 1.5-1 1.5-1.5 1.5-1.5 1.5-2 1-2 1zM247.5 55.5l2-0.5 2-0.5 1.5-1 1.5-1.5 1-1.5 0.5-1.5 0.5-1.5 0-2-0.5-2-1-2-2-2.5-1.5-2-2-2-1.5-0.5-1.5-1-2 0-2 0.5-2 1-2 2-2 2.5-1.5 2.5-1 2-0.5 2 0 2 0.5 2 1 1.5 1.5 1.5 1.5 1 2 1 2.5 0.5 2.5 0zM122.5 196l1 0 1-0.5 5.5-4 3-2 8-3.5 1-1 1-1.5 3.5-11 0.5-2.5 0-2.5-1.5-7-1-5.5 0-6.5 0.5-2 0.5-1 1-0.5 1.5-0.5 6.5 0 6 1 7 1.5 2.5 0 2.5-0.5 11-3.5 1.5-1 1-1 3.5-8 2-3 4-5.5 0.5-1 0-1 0-1-0.5-1-4-5.5-2-3-3.5-8-1-1-1.5-1-11-3.5-2.5-0.5-2.5 0-7 1.5-5.5 1-6.5 0-2-0.5-1-0.5-0.5-1-0.5-1.5 0-6.5 1-6 1.5-7 0-2.5-0.5-2.5-3.5-11-1-1.5-1-1-8-3.5-3-2-5.5-4-1-0.5-1 0-1 0-1 0.5-5.5 4-3 2-8 3.5-1 1-1 1.5-3.5 11-0.5 2.5 0 2.5 1.5 7 1 5.5 0 6.5-0.5 2-0.5 1-1 0.5-1.5 0.5-6.5 0-6-1-7-1.5-2.5 0-2.5 0.5-11 3.5-1.5 1-1 1-3.5 8-2 3-4 5.5-0.5 1 0 1 0 1 0.5 1 4 5.5 2 3 3.5 8 1 1 1.5 1 11 3.5 2.5 0.5 2.5 0 7-1.5 5.5-1 6.5 0 2 0.5 1 0.5 0.5 1 0.5 1.5 0 6.5-1 6-1.5 7 0 2.5 0.5 2.5 3.5 11 1 1.5 1 1 8 3.5 3 2 5.5 4 1 0.5zM367.5 196l1 0 1-0.5 5.5-4 3-2 8-3.5 1-1 1-1.5 3.5-11 0.5-2.5 0-2.5-1.5-7-1-5.5 0-6.5 0.5-2 0.5-1 1-0.5 1.5-0.5 6.5 0 6 1 7 1.5 2.5 0 2.5-0.5 11-3.5 1.5-1 1-1 3.5-8 2-3 4-5.5 0.5-1 0-1 0-1-0.5-1-4-5.5-2-3-3.5-8-1-1-1.5-1-11-3.5-2.5-0.5-2.5 0-7 1.5-6 1-6.5 0-1.5-0.5-1-0.5-0.5-1-0.5-2 0-6.5 1-5.5 1.5-7 0-2.5-0.5-2.5-3.5-11-1-1.5-1-1-8-3.5-3-2-5.5-4-1-0.5-1 0-1 0-1 0.5-5.5 4-3 2-8 3.5-1 1-1 1.5-3.5 11-0.5 2.5 0 2.5 1.5 7 1 5.5 0 6.5-0.5 2-0.5 1-1 0.5-1.5 0.5-6.5 0-6-1-7-1.5-2.5 0-2.5 0.5-11 3.5-1.5 1-1 1-3.5 8-2 3-4 5.5-0.5 1 0 1 0 1 0.5 1 4 5.5 2 3 3.5 8 1 1 1.5 1 11 3.5 2.5 0.5 2.5 0 7-1.5 5.5-1 6.5 0 2 0.5 1 0.5 0.5 1 0.5 1.5 0 6.5-1 6-1.5 7 0 2.5 0.5 2.5 3.5 11 1 1.5 1 1 8 3.5 3 2 5.5 4 1 0.5zM77 89.5l1.5-0.5 2.5-2 2.5-2 2.5-2.5 1.5-2 1.5-2 0.5-2 0-1.5-0.5-1.5-1.5-2-1.5-1.5-2.5-1.5-2.5-1-2.5-0.5-2.5-0.5-2.5 0.5-2 0.5-1.5 0.5-1 1-1 1-0.5 1.5-0.5 2-0.5 2 0.5 2.5 0.5 2.5 0.5 2 1 2 1.5 2 1.5 1.5 1.5 1 1.5 0.5zM123 89l-2 0-1.5-1-2-1-2-2-1.5-2-1.5-2.5-1-2-0.5-2 0-2 0.5-1.5 1-1.5 1-1.5 1.5-1 2-1 2-1 2 0 2.5 0 2.5 0 2 1 2 1 1.5 1 1 1.5 1 1.5 0.5 2 0 2-0.5 2-1 2-2 2.5-2 2.5-2 1.5-2 1zM170.5 89.5l1.5-0.5 2-2 1.5-2 1-2 1-2.5 0.5-3 0.5-2.5-0.5-2.5-0.5-1.5-1-1.5-1-1-1.5-1-2-0.5-2-0.5-2 0-2.5 0.5-2 0.5-2 1-2 1-1.5 1.5-1.5 1.5-1 1.5 0 1.5 0 1 0.5 2 2 2.5 2 2.5 3 3 2 1.5 2 1 2 0.5zM322 89.5l1.5-0.5 2.5-2 2.5-2 2.5-2.5 1.5-2 1.5-2 0.5-2 0-1.5-0.5-1.5-1.5-2-1.5-1.5-2.5-1.5-2.5-1-2.5-0.5-2.5-0.5-2.5 0.5-2 0.5-1.5 0.5-1 1-1 1-0.5 1.5-0.5 2-0.5 2 0.5 2.5 0.5 2.5 0.5 2 1 2 1.5 2 1.5 1.5 1.5 1 1.5 0.5zM368 89l-2 0-1.5-1-2-1-2-2-1.5-2-1.5-2.5-1-2-0.5-2 0-2 0.5-1.5 1-1.5 1-1.5 1.5-1 2-1 2-1 2 0 2.5 0 2.5 0 2 1 2 1 1.5 1 1 1.5 1 1.5 0.5 2 0 2-0.5 2-1 2-2 2.5-2 2.5-2 1.5-2 1zM415.5 89.5l1.5-0.5 2-2 1.5-2 1-2 1-2.5 0.5-3 0.5-2.5-0.5-2.5-0.5-1.5-1-1.5-1-1-1.5-1-2-0.5-2-0.5-2 0-2.5 0.5-2 0.5-2 1-2 1-1.5 1.5-1.5 1.5-1 1.5 0 1.5 0 1 0.5 2 2 2.5 2 2.5 3 3 2 1.5 2 1 2 0.5zM4.5 100l-4.5 0 0-22 1.5 0.5 1.5 1 2.5 2.5 2.5 2.5 2 2.5 1 2 1 2 0.5 2 0.5 1.5-0.5 1.5-0.5 1-1 1-1 0.5-1.5 1zM249.5 100l-3.5 0-3.5 0-3 0-2.5-0.5-2-1-1-0.5-1-1-0.5-1.5 0-2 0.5-2 0.5-2 1.5-2.5 2.5-3 3-3 2.5-2.5 1.5-0.5 1 0 1.5 0.5 2 2 2.5 2.5 2 2.5 2 2.5 1.5 2.5 0.5 2 0.5 1.5-0.5 1.5 0 1-1 1-1 1-1.5 0.5-2 0.5zM490 100l-5.5 0-2.5-0.5-1.5-0.5-1.5-1-1-1-0.5-1-0.5-1.5 0.5-2 0.5-2 1.5-2.5 2-2.5 2.5-3 2.5-2.5 2-1.5 1.5-0.5zM122.5 147l-2.5-0.5-8-1.5-8.5-1.5-1.5-0.5-0.5-1-0.5-2-1-7.5-2-8 0-2.5 0.5-2.5 1.5-7.5 1.5-8.5 0.5-1.5 1-0.5 2-0.5 7.5-1 8-2 2.5 0 2.5 0.5 7.5 1.5 8.5 1.5 1.5 0.5 0.5 1 0.5 2 1 7 1.5 8 0.5 2.5-0.5 2.5-1.5 8-1.5 8-0.5 1.5-0.5 0.5-1.5 0.5-8 1.5-8 1.5zM367.5 147l-2.5-0.5-8-1.5-8-1.5-1.5-0.5-0.5-0.5-0.5-1.5-1.5-8-1.5-8-0.5-2.5 0.5-2.5 1.5-8 1-7 0.5-2 0.5-1 1.5-0.5 8.5-1.5 7.5-1.5 2.5-0.5 2.5 0 8 2 7.5 1 2 0.5 1 0.5 0.5 1.5 1.5 8.5 1.5 7.5 0.5 2.5 0 2.5-2 8-1 7.5-0.5 2-0.5 1-1.5 0.5-8.5 1.5-8 1.5zM30 135l2-0.5 2-1 4.5-3.5 2.5-2.5 2-2 1-1.5 0.5-1.5-0.5-1.5-1.5-2-3-3-3-2.5-2.5-2-2.5-1-2-0.5-2 0-1.5 0-1 1-1 1-1 2-0.5 2.5 0 3.5 0 3.5 0 3.5 0.5 2.5 0.5 2 0.5 1.5 1 1 1 1 1 0 1.5 0.5zM218.5 135l1-0.5 1-1 1-1.5 0.5-1.5 0.5-3 0-3 0-6.5-0.5-4-1-1.5-0.5-1-1-1-1-0.5-1 0-1.5 0-2 0.5-2 0.5-2 1.5-2.5 1.5-3 3-2.5 2.5-1 1.5-0.5 1.5 0.5 1.5 2 2.5 3 3 3.5 3 2.5 1.5 2.5 1 2 0.5zM275 135l2-0.5 2-1 4.5-3.5 2.5-2.5 2-2 1-1.5 0.5-1.5-0.5-1.5-1.5-2-3-3-3-2.5-2.5-2-2.5-1-2-0.5-2 0-1.5 0-1 1-1 1-1 2-0.5 2.5 0 3.5 0 3.5 0 3.5 0.5 2.5 0.5 2 0.5 1.5 1 1 1 1 1 0 1.5 0.5zM463.5 135l1-0.5 1-1 1-1.5 0.5-1.5 0.5-3 0-3 0-6.5-0.5-4-1-1.5-0.5-1-1-1-1-0.5-1 0-1.5 0-2 0.5-2 0.5-2 1.5-2.5 1.5-3 3-2.5 2.5-1 1.5-0.5 1.5 0.5 1.5 2 2.5 3 3 3.5 3 2.5 1.5 2.5 1 2 0.5zM78 133.5l-2 0.5-1.5 0-2-0.5-1.5-1-1.5-1.5-1-1.5-1-2-0.5-2.5 0-2.5 0-2.5 0.5-2.5 1-2 1-1.5 1.5-1.5 1.5-1 2-0.5 2 0 2 0.5 2 1 2.5 1.5 2.5 2 2 2 1 2 0.5 1.5 0 1.5-0.5 1.5-0.5 1.5-1.5 2-2 2-2 1.5-2.5 1.5zM124 133.5l2-0.5 2-1 2-1.5 1-1.5 1-1.5 1-2 0.5-2 0-2-0.5-2-1-2-1-2-2-1.5-1.5-1-2-1-2-0.5-2 0-2 0.5-2 1-2 1-1.5 2-1 1.5-1 2-0.5 2 0 2 0.5 2 1 2 1 2 2 1.5 2 1.5 2 1 2 0zM171.5 133.5l-2 0.5-2-0.5-2-0.5-2.5-1-2.5-2-2.5-2.5-1-2-1-2 0-1.5 0.5-1.5 1-2 1.5-2 2-2 2.5-1.5 2.5-1.5 2-0.5 2 0 1.5 0.5 1.5 0.5 1.5 1 1.5 1.5 1 1.5 0.5 2 0.5 2 0 2 0 2.5-0.5 2.5-0.5 2-1 1.5-1.5 1.5-1.5 1zM323 133.5l-2 0.5-1.5 0-2-0.5-1.5-1-1.5-1.5-1-1.5-1-2-0.5-2.5 0-2.5 0-2.5 0.5-2.5 1-2 1-1.5 1.5-1.5 1.5-1 2-0.5 2 0 2 0.5 2 1 2.5 1.5 2.5 2 2 2 1 2 0.5 1.5 0 1.5-0.5 1.5-0.5 1.5-1.5 2-2 2-2 1.5-2.5 1.5zM369 133.5l2-0.5 2-1 2-1.5 1-1.5 1-1.5 1-2 0.5-2 0-2-0.5-2-1-2-1-2-2-1.5-1.5-1-2-1-2-0.5-2 0-2 0.5-2 1-2 1-1.5 2-1 1.5-1 2-0.5 2 0 2 0.5 2 1 2 1 2 2 1.5 2 1.5 2 1 2 0zM416.5 133.5l-2 0.5-2-0.5-2-0.5-2.5-1-2.5-2-2.5-2.5-1-2-1-2 0-1.5 0.5-1.5 1-2 1.5-2 2-2 2.5-1.5 2.5-1.5 2-0.5 2 0 1.5 0.5 1.5 0.5 1.5 1 1.5 1.5 1 1.5 0.5 2 0.5 2 0 2 0 2.5-0.5 2.5-0.5 2-1 1.5-1.5 1.5-1.5 1zM0 167l0-22 6 0 2.5 0.5 1.5 1 1.5 1 1 1 0 1 0 2.5-1 3-2.5 4-3.5 4-3.5 3.5-1 0.5zM198.5 169l18.5-18.5-0.5 0-2-2-3-1.5-3-1-3.5-1-5.5-0.5-5 0.5-3 0.5-1 0.5-1 0.5-0.5 1-0.5 1 0 2.5 0.5 3 1 3.5 1 3 2.5 3.5 2.5 3 2 2 0 0.5zM245 167l-1.5-0.5-2.5-2-3.5-3.5-2.5-3.5-1.5-2.5-1-2.5-0.5-2 0.5-2 1.5-1.5 1.5-1 2-0.5 3-0.5 4 0 4.5 0 3.5 0.5 2.5 1 1.5 1 1 1 0 1 0 2.5-1 3-2.5 4-3.5 4-3.5 3.5-1 0.5zM292 169l2.5-2.5 2.5-3 2-3.5 1.5-3 0.5-3.5 0.5-3-0.5-2.5-0.5-1.5-1-0.5-1-0.5-3-0.5-5-0.5-5.5 0.5-3.5 1-3 1-3 1.5-2 2-0.5 0 19 19zM490 167l-1 0-1-0.5-3.5-3.5-3.5-4-2.5-4-1-3 0-2.5 0-1 1-1 1.5-1 1.5-1 2.5-0.5 6 0zM464.5 178.5l-2 0.5-3 0-3-1-2.5-1-2.5-1-2.5-1.5-3-2.5-2.5-2.5-0.5 0 19-19 0 0.5 1 1 1.5 2 1.5 3 1 3.5 0.5 4 0.5 6-0.5 4.5-0.5 1.5-0.5 1-1 0.5zM79 178l2.5-0.5 2-1 2-1 1.5-1.5 1.5-1.5 1-1.5 0-1.5 0-1-0.5-2-1.5-2-2-2.5-3-3-2-1.5-2-1.5-2-0.5-1.5 0-1.5 0.5-2 1.5-1.5 1.5-1.5 2.5-1 2.5-0.5 2.5-0.5 3 0.5 2.5 0.5 1.5 0.5 1.5 1 1 1.5 1.5 2 0.5 2 0.5 2.5 0zM172.5 178l1.5-0.5 1.5-1 1-1 1-1 0.5-1.5 0-2 0.5-2-0.5-2.5-0.5-2.5-1-2-1-2-1-1.5-1.5-1.5-1.5-1-1.5-0.5-1.5 0-2 0.5-2 1.5-2.5 2-3 3-1.5 2-1.5 2-0.5 2 0 1.5 0.5 1.5 1.5 2 2 2 2.5 1 2.5 1 3 0.5 2.5 0.5zM324 178l2.5-0.5 2-1 2-1 1.5-1.5 1.5-1.5 1-1.5 0-1.5 0-1-0.5-2-1.5-2-2-2.5-3-3-2-1.5-2-1.5-2-0.5-1.5 0-1.5 0.5-2 1.5-1.5 1.5-1.5 2.5-1 2.5-0.5 2.5-0.5 3 0.5 2.5 0.5 1.5 0.5 1.5 1 1 1.5 1.5 2 0.5 2 0.5 2.5 0zM417.5 178l1.5-0.5 1.5-1 1-1 1-1 0.5-1.5 0-2 0.5-2-0.5-2.5-0.5-2.5-1-2-1-2-1-1.5-1.5-1.5-1.5-1-1.5-0.5-1.5 0-2 0.5-2 1.5-2.5 2-3 3-1.5 2-1.5 2-0.5 2 0 1.5 0.5 1.5 1.5 2 2 2 2.5 1 2.5 1 3 0.5 2.5 0.5zM124.5 178l-2.5 0-2.5 0-2-0.5-2-1-1.5-1-1.5-1.5-1-1.5-0.5-2 0-2 0.5-2 1-2 1.5-2.5 2-2.5 2-2 2-1 2-0.5 2 0 1.5 1 2 1 2 2 1.5 2 1.5 2.5 1 2 0.5 2 0 2-0.5 1.5-1 1.5-1 1.5-1.5 1-1.5 1-2 0.5zM369.5 178l-2.5 0-2.5 0-2-0.5-2-1-1.5-1-1.5-1.5-1-1.5-0.5-2 0-2 0.5-2 1-2 1.5-2.5 2-2.5 2-2 2-1 2-0.5 2 0 1.5 1 2 1 2 2 1.5 2 1.5 2.5 1 2 0.5 2 0 2-0.5 1.5-1 1.5-1 1.5-1.5 1-1.5 1-2 0.5zM0 318.5l0-18 2.5 0 2-0.5 2-0.5 1.5-1 1.5-1.5 1-1.5 0.5-1.5 0.5-2-0.5-2-0.5-2-1-2.5-1.5-2-2.5-2.5-2-1.5-2-1-1.5 0 0-9 2.5-0.5 8-1.5 8-1.5 1 0 1-0.5 0.5-1 0-1 1.5-8 1.5-8 0.5-2.5-0.5-2.5-1.5-8-1.5-8 0-1-0.5-1-1-0.5-1 0-8-1.5-8-1.5-2.5-0.5 0-9 1.5 0 2-1 2-1.5 2.5-2.5 1.5-2 1-2.5 0.5-2 0.5-2-0.5-2-0.5-1.5-1-1.5-1.5-1.5-1.5-1-2-0.5-2-0.5-2.5 0 0-18 1 0 1 0.5 5.5 4 3 2 8 3.5 1 1 1 1.5 3.5 11 0.5 2.5 0 2.5-1.5 7-1 5.5 0 6.5 0.5 2 0.5 1 1 0.5 1.5 0.5 6.5 0 6-1 7-1.5 2.5 0 2.5 0.5 11 3.5 1.5 1 1 1 3.5 8 2 3 4 5.5 0.5 1 0 1 0 1-0.5 1-4 5.5-2 3-3.5 8-1 1-1.5 1-11 3.5-2.5 0.5-2.5 0-7-1.5-6-1-6.5 0-1.5 0.5-1 0.5-0.5 1-0.5 2 0 6.5 1 5.5 1.5 7 0 2.5-0.5 2.5-3.5 11-1 1.5-1 1-8 3.5-3 2-5.5 4-1 0.5zM245 318.5l-1 0-1-0.5-5.5-4-3-2-8-3.5-1-1-1-1.5-3.5-11-0.5-2.5 0-2.5 1.5-7 1-5.5 0-6.5-0.5-2-0.5-1-1-0.5-1.5-0.5-6.5 0-6 1-7 1.5-2.5 0-2.5-0.5-11-3.5-1.5-1-1-1-3.5-8-2-3-4-5.5-0.5-1 0-1 0-1 0.5-1 4-5.5 2-3 3.5-8 1-1 1.5-1 11-3.5 2.5-0.5 2.5 0 7 1.5 5.5 1 6.5 0 2-0.5 1-0.5 0.5-1 0.5-1.5 0-6.5-1-6-1.5-7 0-2.5 0.5-2.5 3.5-11 1-1.5 1-1 8-3.5 3-2 5.5-4 1-0.5 1 0 1 0 1 0.5 5.5 4 3 2 8 3.5 1 1 1 1.5 3.5 11 0.5 2.5 0 2.5-1.5 7-1 6 0 6.5 0.5 1.5 0.5 1 1 0.5 2 0.5 6.5 0 5.5-1 7-1.5 2.5 0 2.5 0.5 11 3.5 1.5 1 1 1 3.5 8 2 3 4 5.5 0.5 1 0 1 0 1-0.5 1-4 5.5-2 3-3.5 8-1 1-1.5 1-11 3.5-2.5 0.5-2.5 0-7-1.5-5.5-1-6.5 0-2 0.5-1 0.5-0.5 1-0.5 1.5 0 6.5 1 6 1.5 7 0 2.5-0.5 2.5-3.5 11-1 1.5-1 1-8 3.5-3 2-5.5 4-1 0.5zM490 318.5l-1 0-1-0.5-5.5-4-3-2-8-3.5-1-1-1-1.5-3.5-11-0.5-2.5 0-2.5 1.5-7 1-5.5 0-6.5-0.5-2-0.5-1-1-0.5-1.5-0.5-6.5 0-6 1-7 1.5-2.5 0-2.5-0.5-11-3.5-1.5-1-1-1-3.5-8-2-3-4-5.5-0.5-1 0-1 0-1 0.5-1 4-5.5 2-3 3.5-8 1-1 1.5-1 11-3.5 2.5-0.5 2.5 0 7 1.5 5.5 1 6.5 0 2-0.5 1-0.5 0.5-1 0.5-1.5 0-6.5-1-6-1.5-7 0-2.5 0.5-2.5 3.5-11 1-1.5 1-1 8-3.5 3-2 5.5-4 1-0.5 1 0 0 18-2.5 0-2 0.5-2 0.5-1.5 1-1.5 1.5-1 1.5-0.5 1.5-0.5 2 0.5 2 0.5 2 1 2.5 1.5 2 2.5 2.5 2 1.5 2 1 1.5 0 0 9-2.5 0.5-8 1.5-8 1.5-1 0-1 0.5-0.5 1 0 1-1.5 8-1.5 8-0.5 2.5 0.5 2.5 1.5 8 1.5 8 0 1 0.5 1 1 0.5 1 0 8 1.5 8 1.5 2.5 0.5 0 9-1.5 0-2 1-2 1.5-2.5 2.5-1.5 2-1 2.5-0.5 2-0.5 2 0.5 2 0.5 1.5 1 1.5 1.5 1.5 1.5 1 2 0.5 2 0.5 2.5 0zM151 216.5l18.5-18.5-0.5 0-2-2-3-2.5-4.5-3-2-0.5-2.5-1-2.5-0.5-2 0-1.5 0-1.5 0.5-1 0.5-0.5 1-0.5 1.5-0.5 1.5-0.5 5.5 0.5 6 0.5 2.5 1 2.5 1 2.5 1 2 2 2 0 0.5zM47.5 212l-1.5 0-2-0.5-2-1.5-2.5-2-3-3-2-2.5-1-2-0.5-2 0-1.5 0.5-1.5 1.5-1.5 1.5-1.5 2-1 2-1 2-1 2.5 0 2-0.5 2 0.5 2 0.5 1.5 0.5 1 1 1.5 1.5 0.5 1.5 0 2 0.5 2.5-0.5 2.5-0.5 2.5-1.5 2.5-1.5 2.5-1.5 1.5-1.5 1zM199 212l-1.5 0-1.5-0.5-1.5-1-1.5-1.5-1.5-2-1-2-1-2.5 0-2.5-0.5-2 0.5-2 0.5-2 0.5-1.5 1-1 1.5-1.5 1.5-0.5 2 0 2.5-0.5 2.5 0.5 2.5 0.5 2.5 1.5 2.5 1.5 1.5 1.5 1 1.5 0.5 1.5 0 1.5-0.5 2-1.5 2-1.5 2-3 3-2.5 2-2 1.5zM246 211.5l2-1 2-1 2-2 2-2.5 1.5-2.5 0.5-2 0.5-2 0-2-1-2-1-1.5-1.5-1.5-1.5-1-2-0.5-2.5-0.5-2.5 0-2.5 0-2 0.5-2 1-1.5 1-1.5 1.5-1 1.5-0.5 1.5 0 1.5 0.5 2 0.5 2 1 2.5 1.5 2 2 2 2 1.5 1.5 1 2 0.5zM292.5 212l-1.5 0-2-0.5-2-1.5-2.5-2-3-3-2-2.5-1-2-0.5-2 0-1.5 0.5-1.5 1.5-1.5 1.5-1.5 2-1 2-1 2-1 2.5 0 2-0.5 2 0.5 2 0.5 1.5 0.5 1 1 1.5 1.5 0.5 1.5 0 2 0.5 2.5-0.5 2.5-0.5 2.5-1.5 2.5-1.5 2.5-1.5 1.5-1.5 1zM444 212l-1.5 0-1.5-0.5-1.5-1-1.5-1.5-1.5-2-1-2-1-2.5 0-2.5-0.5-2 0.5-2 0.5-2 0.5-1.5 1-1 1.5-1.5 1.5-0.5 2 0 2.5-0.5 2.5 0.5 2.5 0.5 2.5 1.5 2.5 1.5 1.5 1.5 1 1.5 0.5 1.5 0 1.5-0.5 2-1.5 2-1.5 2-3 3-2.5 2-2 1.5zM127 222.5l2.5-0.5 2-0.5 1.5-0.5 1-1 1-1 0-1 0.5-1.5-0.5-1.5-0.5-2-1.5-2.5-2-2.5-2-2.5-2.5-2.5-2-2-1.5-0.5-1 0-1.5 0.5-2.5 2.5-3 3-2.5 3-1.5 2.5-0.5 2-0.5 2 0 2 0.5 1.5 1 1 1 0.5 2 1 2.5 0.5 3 0 3.5 0zM372 222.5l2.5-0.5 2-0.5 1.5-0.5 1-1 1-1 0-1 0.5-1.5-0.5-1.5-0.5-2-1.5-2.5-2-2.5-2-2.5-2.5-2.5-2-2-1.5-0.5-1 0-1.5 0.5-2.5 2.5-3 3-2.5 3-1.5 2.5-0.5 2-0.5 2 0 2 0.5 1.5 1 1 1 0.5 2 1 2.5 0.5 3 0 3.5 0zM245 269.5l2.5-0.5 8-1.5 8-1.5 1.5-0.5 0.5-0.5 0.5-1.5 1.5-8 1.5-8 0.5-2.5-0.5-2.5-1.5-8-1-7-0.5-2-0.5-1-1.5-0.5-8.5-1.5-7.5-1.5-2.5-0.5-2.5 0-8 2-7.5 1-2 0.5-1 0.5-0.5 1.5-1.5 8.5-1.5 7.5-0.5 2.5 0 2.5 2 8 1 7.5 0.5 2 0.5 1 1.5 0.5 8.5 1.5 8 1.5zM96 257.5l-2 0.5-2-0.5-2.5-1-2.5-1.5-3.5-3-3-3-2-2.5-0.5-1.5 0.5-1.5 1-1.5 2.5-2.5 3-3 2.5-1.5 2-1.5 2-0.5 2-0.5 1.5 0 1 0 1 0.5 1 1 0.5 1 1 1.5 0.5 4 0 6.5 0 3-0.5 3-0.5 1.5-1 1.5-1 1zM152.5 257.5l-1.5 0.5-1.5-0.5-1 0-1-1-1-1-0.5-1.5-0.5-2-0.5-2.5 0-3.5 0-4 0-3 0.5-2.5 1-2 1-1 1-1 1.5 0 2 0 2 0.5 2.5 1 2.5 2 3 2.5 3 3 1.5 2 0.5 1.5-0.5 1.5-1 1.5-2 2-2.5 2.5-4.5 3.5-2 1zM341 257.5l-2 0.5-2-0.5-2.5-1-2.5-1.5-3.5-3-3-3-2-2.5-0.5-1.5 0.5-1.5 1-1.5 2.5-2.5 3-3 2.5-1.5 2-1.5 2-0.5 2-0.5 1.5 0 1 0 1 0.5 1 1 0.5 1 1 1.5 0.5 4 0 6.5 0 3-0.5 3-0.5 1.5-1 1.5-1 1zM397.5 257.5l-1.5 0.5-1.5-0.5-1 0-1-1-1-1-0.5-1.5-0.5-2-0.5-2.5 0-3.5 0-4 0-3 0.5-2.5 1-2 1-1 1-1 1.5 0 2 0 2 0.5 2.5 1 2.5 2 3 2.5 3 3 1.5 2 0.5 1.5-0.5 1.5-1 1.5-2 2-2.5 2.5-4.5 3.5-2 1zM1.5 256l-1.5 0 0-22 2 0 2 1 2 1 1.5 1 1.5 2 1 1.5 1 2 0 2 0 1.5-0.5 2-1 2-1 1.5-1.5 2-2 1-2 1zM49.5 256l1.5-1 1.5-1 1-1.5 1-1.5 0.5-2 0.5-2.5 0-2.5 0-2-0.5-2-1-2-1-1.5-1.5-1.5-1.5-1-1.5-0.5-1.5 0-2 0.5-2 0.5-2.5 1-2 1.5-2 2-1.5 2-1 2-0.5 1.5 0 1.5 1 2 1 2 2.5 2.5 2.5 2 2.5 1 2 0.5 2.5 0.5zM201 256l2-1 2-1 2-1.5 2-2 1.5-2 0.5-1.5 0.5-1.5 0-1.5-1-2-1-2-2-2-2.5-2-2.5-1.5-2-0.5-2-0.5-2 0-2 1-1.5 1-1.5 1.5-1 1.5-0.5 2-0.5 2.5 0 2.5 0 2.5 0.5 2 1 2 1 1.5 1.5 1.5 1.5 1 2 0.5 2 0zM246.5 256l-2 0-2 0-2-1-2-1.5-2-1.5-1-2-1-2-0.5-2 0-2 0.5-2 1-2 1-1.5 1.5-2 2-1 2-1 2-0.5 2 0 2 0.5 2 1 1.5 1 2 1.5 1 2 1 2 0.5 2 0 2-0.5 2-1 2-1 1.5-1 1.5-2 1.5-2 1zM294.5 256l1.5-1 1.5-1 1-1.5 1-1.5 0.5-2 0.5-2.5 0-2.5 0-2-0.5-2-1-2-1-1.5-1.5-1.5-1.5-1-1.5-0.5-1.5 0-2 0.5-2 0.5-2.5 1-2 1.5-2 2-1.5 2-1 2-0.5 1.5 0 1.5 1 2 1 2 2.5 2.5 2.5 2 2.5 1 2 0.5 2.5 0.5zM446 256l2-1 2-1 2-1.5 2-2 1.5-2 0.5-1.5 0.5-1.5 0-1.5-1-2-1-2-2-2-2.5-2-2.5-1.5-2-0.5-2-0.5-2 0-2 1-1.5 1-1.5 1.5-1 1.5-0.5 2-0.5 2.5 0 2.5 0 2.5 0.5 2 1 2 1 1.5 1.5 1.5 1.5 1 2 0.5 2 0zM490 256l-2 0-2-1-2-1-2-1.5-1-1.5-1-2-1-2 0-2 0-2 1-2 1-2 1-1.5 2-1.5 2-1 2-1 2 0zM368 489.5l-0.5 0.5-28-28 0-0.5 1-1 1.5-2 1.5-2.5 0.5-3 1-3.5 0.5-5.5-0.5-5-0.5-3-0.5-1-1-0.5-2-1-2.5 0-3 0.5-3 1-2.5 1-2.5 1.5-3.5 2.5-3 3-0.5 0-28.5-28.5-0.5 0-3 3-3.5 2.5-2.5 1.5-3 1.5-3.5 0.5-3 0.5-2.5-0.5-1.5-0.5-0.5-1-0.5-1-0.5-3-0.5-5 0.5-5.5 1-3.5 1-3 1.5-3 2-2 0-0.5 19 19 0-0.5 2.5-2.5 2.5-3 2-3 1-2.5 1-3 0.5-3 0-2.5-0.5-2-0.5-1-1-0.5-2.5-1-5-0.5-5.5 0.5-4 0.5-3.5 1-2.5 1.5-2 1.5-1 1-0.5 0-28-28-28 28-0.5 0-2-2-3-1.5-3-1-3.5-1-5.5-0.5-5 0.5-3 0.5-1 0.5-1 0.5-0.5 1.5-0.5 2.5 0.5 3 0.5 3.5 1.5 3 1.5 2.5 2.5 3.5 3 3 0 0.5 19-19 0 0.5 2 2 1.5 3 1 2.5 0.5 3 0.5 5 0 5 0 3.5-1 2-0.5 1-1 0.5-2 0.5-3.5 0-3.5-1-3-1-3-2-3.5-2.5-3-3-0.5 0-28.5 28.5-0.5 0-3-3-3.5-2.5-2.5-1.5-2.5-1-3-1-3-0.5-2.5 0-2 1-1 0.5-0.5 1-0.5 3-0.5 5 0.5 5.5 1 3.5 0.5 3 1.5 2.5 1.5 2 1 1 0 0.5-28 28-28-28 0-0.5 2-2 1.5-3 1-3 1-3.5 0.5-5.5-0.5-5-0.5-3-0.5-1-0.5-1-1.5-0.5-2.5-0.5-3 0.5-3.5 0.5-3 1.5-2.5 1.5-3.5 2.5-3 3-0.5 0-28.5-28.5 0-0.5 3-3 2.5-3.5 1.5-2.5 1.5-3 0.5-3.5 0.5-3-0.5-2.5-0.5-1.5-1-0.5-1-0.5-3-0.5-5-0.5-5.5 0.5-3.5 1-3 1-3 1.5-2 2-0.5 0-28-28 28-28 0.5 0 2 2 3 1.5 3 1 3.5 1 5.5 0.5 5-0.5 3-0.5 1-0.5 1-0.5 0.5-1.5 0.5-2.5-0.5-3-0.5-3.5-1.5-3-1.5-2.5-2.5-3.5-3-3 0-0.5 28.5-28.5 0-0.5-3-3-2.5-3.5-1.5-2.5-1-2.5-1-3-0.5-3 0-2.5 1-2 0.5-1 1-0.5 3-0.5 5-0.5 5.5 0.5 3.5 1 3 0.5 2.5 1.5 2 1.5 1 1 0.5 0-19 19 0.5 0 2.5 2.5 3 2.5 3 2 2.5 1 3 1 3 0.5 2.5 0 2-0.5 1-0.5 0.5-1 1-2.5 0.5-5-0.5-5.5-0.5-4-1-3.5-1.5-2.5-1.5-2-1-1 0-0.5 28-28 28 28 0.5 0 1-1 2-1.5 2.5-1.5 3-0.5 3.5-1 5.5-0.5 5 0.5 3 0.5 1 0.5 0.5 1 1 2 0 2.5-0.5 3-1 3-1 2.5-1.5 2.5-2.5 3.5-3 3 0 0.5 28.5 28.5 0 0.5-3 3-2.5 3.5-1.5 2.5-1.5 3-0.5 3.5-0.5 3 0.5 2.5 0.5 1.5 1 0.5 1 0.5 3 0.5 5 0.5 5.5-0.5 3.5-1 3-1 3-1.5 2-2 0.5 0-19-19 0.5 0 2.5-2.5 3-2.5 3-2 2.5-1 3-1 3-0.5 2.5 0 2 0.5 1 0.5 0.5 1 1 2.5 0.5 5-0.5 5.5-0.5 4-1 3.5-1.5 2.5-1.5 2-1 1 0 0.5 28 28 28-28 0.5 0 2 2 3 1.5 3 1 3.5 1 5.5 0.5 5-0.5 3-0.5 1-0.5 1-0.5 0.5-1.5 0.5-2.5-0.5-3-0.5-3.5-1.5-3-1.5-2.5-2.5-3.5-3-3 0-0.5 28.5-28.5 0.5 0 3 3 3.5 2.5 2.5 1.5 3 1.5 3.5 0.5 3 0.5 2.5-0.5 1.5-0.5 0.5-1 0.5-1 0.5-3 0.5-5-0.5-5.5-1-3.5-1-3-1.5-3-2-2 0-0.5 28-28 28 28 0 0.5-1 1-1.5 2-1.5 2.5-1 3.5-0.5 4-0.5 5.5 0.5 5 1 2.5 0.5 1 1 0.5 2 0.5 2.5 0 3-0.5 3-1 2.5-1 3-2 3-2.5 2.5-2.5 0.5 0-19-19 0.5 0 1-1 2-1.5 2.5-1.5 3-0.5 3.5-1 5.5-0.5 5 0.5 3 0.5 1 0.5 0.5 1 1 2 0 2.5-0.5 3-1 3-1 2.5-1.5 2.5-2.5 3.5-3 3 0 0.5 28.5 28.5 0 0.5-3 3-2.5 3.5-1.5 2.5-1.5 3-0.5 3.5-0.5 3 0.5 2.5 0.5 1.5 1 0.5 1 0.5 3 0.5 5 0.5 5.5-0.5 3.5-1 3-1 3-1.5 2-2 0.5 0 28 28-28 28-0.5 0-2-2-3-1.5-3-1-3.5-1-5.5-0.5-5 0.5-3 0.5-1 0.5-1 0.5-0.5 1.5-0.5 2.5 0.5 3 0.5 3.5 1.5 3 1.5 2.5 2.5 3.5 3 3 0 0.5-28.5 28.5-0.5 0-3-3-3.5-2.5-2.5-1.5-3-1.5-3.5-0.5-3-0.5-2.5 0.5-1.5 0.5-0.5 1-0.5 1-0.5 3-0.5 5 0.5 5.5 1 3.5 1 3 1.5 3 2 2 0 0.5zM123 289.5l1.5-0.5 3-3 3-3 2.5-3.5 1.5-2.5 0.5-2.5 0-2 0-1.5-1.5-1.5-1.5-1-2-0.5-3-0.5-4 0-4.5 0-3.5 0.5-2.5 1-1.5 1-1 1 0 1 0 2.5 1 3 2.5 4 4 4.5 2 2 1.5 1 1 0.5zM321 291.5l-0.5 0.5 0-0.5-2-2-2.5-3-2.5-3.5-1-3-1-3.5-0.5-3 0-2.5 0.5-1 0.5-1 1-0.5 1-0.5 3-0.5 5-0.5 5.5 0.5 3.5 1 3 1 3 1.5 2 2 0.5 0zM368 289.5l1.5-0.5 3-3 3-3 2.5-3.5 1.5-2.5 0.5-2.5 0-2 0-1.5-1.5-1.5-1.5-1-2-0.5-3-0.5-4 0-4.5 0-3.5 0.5-2.5 1-1.5 1-1 1 0 1 0 2.5 1 3 2.5 4 4 4.5 2 2 1.5 1 1 0.5zM154.5 301l3.5-1 3.5-2 4-2.5 3.5-3.5 0.5 0-19-19 0 0.5-1.5 1.5-1.5 2.5-1 2-1 3-0.5 3 0 4 0 4 0 3 0.5 1.5 0.5 1.5 0.5 1 1 0.5 1.5 0.5 1.5 0 2 0zM49.5 300.5l-2.5 0.5-3-0.5-2.5-0.5-2.5-1-2.5-1.5-1.5-1.5-1.5-2-0.5-1.5 0-1.5 0.5-2 1.5-2 1.5-2 3-3 2.5-2 2-1.5 2-0.5 1.5 0 1.5 0.5 1.5 1 1.5 1.5 1 1.5 1 2 1 2 0.5 2.5 0.5 2.5-0.5 2 0 2-0.5 1.5-1.5 1.5-1 1-1.5 0.5zM201.5 300.5l-2.5 0.5-2 0-2-0.5-2-0.5-1.5-1.5-1-1-0.5-1.5-0.5-1.5-0.5-2.5 0.5-3 0.5-2.5 1-2.5 1.5-2.5 1.5-1.5 2-1.5 1.5-0.5 1.5 0 2 0.5 2 1.5 2 1.5 3 3 2 2.5 1.5 2 0.5 2 0 1 0 1.5-1 1.5-1.5 1.5-1.5 1.5-2 1-2 1zM294.5 300.5l-2.5 0.5-3-0.5-2.5-0.5-2.5-1-2.5-1.5-1.5-1.5-1.5-2-0.5-1.5 0-1.5 0.5-2 1.5-2 1.5-2 3-3 2.5-2 2-1.5 2-0.5 1.5 0 1.5 0.5 1.5 1 1.5 1.5 1 1.5 1 2 1 2 0.5 2.5 0.5 2.5-0.5 2 0 2-0.5 1.5-1.5 1.5-1 1-1.5 0.5zM446.5 300.5l-2.5 0.5-2 0-2-0.5-2-0.5-1.5-1.5-1-1-0.5-1.5-0.5-1.5-0.5-2.5 0.5-3 0.5-2.5 1-2.5 1.5-2.5 1.5-1.5 2-1.5 1.5-0.5 1.5 0 2 0.5 2 1.5 2 1.5 3 3 2 2.5 1.5 2 0.5 2 0 1 0 1.5-1 1.5-1.5 1.5-1.5 1.5-2 1-2 1zM247.5 300.5l2-0.5 2-0.5 1.5-1 1.5-1.5 1-1.5 0.5-1.5 0.5-1.5 0-2-0.5-2-1-2-2-2.5-1.5-2-2-2-1.5-0.5-1.5-1-2 0-2 0.5-2 1-2 2-2 2.5-1.5 2.5-1 2-0.5 2 0 2 0.5 2 1 1.5 1.5 1.5 1.5 1 2 1 2.5 0.5 2.5 0zM122.5 441l1 0 1-0.5 5.5-4 3-2 8-3.5 1-1 1-1.5 3.5-11 0.5-2.5 0-2.5-1.5-7-1-5.5 0-6.5 0.5-2 0.5-1 1-0.5 1.5-0.5 6.5 0 6 1 7 1.5 2.5 0 2.5-0.5 11-3.5 1.5-1 1-1 3.5-8 2-3 4-5.5 0.5-1 0-1 0-1-0.5-1-4-5.5-2-3-3.5-8-1-1-1.5-1-11-3.5-2.5-0.5-2.5 0-7 1.5-6 1-6.5 0-1.5-0.5-1-0.5-0.5-1-0.5-2 0-6.5 1-5.5 1.5-7 0-2.5-0.5-2.5-3.5-11-1-1.5-1-1-8-3.5-3-2-5.5-4-1-0.5-1 0-1 0-1 0.5-5.5 4-3 2-8 3.5-1 1-1 1.5-3.5 11-0.5 2.5 0 2.5 1.5 7 1 5.5 0 6.5-0.5 2-0.5 1-1 0.5-1.5 0.5-6.5 0-6-1-7-1.5-2.5 0-2.5 0.5-11 3.5-1.5 1-1 1-3.5 8-2 3-4 5.5-0.5 1 0 1 0 1 0.5 1 4 5.5 2 3 3.5 8 1 1 1.5 1 11 3.5 2.5 0.5 2.5 0 7-1.5 6-1 6.5 0 1.5 0.5 1 0.5 0.5 1 0.5 2 0 6.5-1 5.5-1.5 7 0 2.5 0.5 2.5 3.5 11 1 1.5 1 1 8 3.5 3 2 5.5 4 1 0.5zM367.5 441l1 0 1-0.5 5.5-4 3-2 8-3.5 1-1 1-1.5 3.5-11 0.5-2.5 0-2.5-1.5-7-1-6 0-6.5 0.5-1.5 0.5-1 1-0.5 2-0.5 6.5 0 5.5 1 7 1.5 2.5 0 2.5-0.5 11-3.5 1.5-1 1-1 3.5-8 2-3 4-5.5 0.5-1 0-1 0-1-0.5-1-4-5.5-2-3-3.5-8-1-1-1.5-1-11-3.5-2.5-0.5-2.5 0-7 1.5-5.5 1-6.5 0-2-0.5-1-0.5-0.5-1-0.5-1.5 0-6.5 1-6 1.5-7 0-2.5-0.5-2.5-3.5-11-1-1.5-1-1-8-3.5-3-2-5.5-4-1-0.5-1 0-1 0-1 0.5-5.5 4-3 2-8 3.5-1 1-1 1.5-3.5 11-0.5 2.5 0 2.5 1.5 7 1 5.5 0 6.5-0.5 2-0.5 1-1 0.5-1.5 0.5-6.5 0-6-1-7-1.5-2.5 0-2.5 0.5-11 3.5-1.5 1-1 1-3.5 8-2 3-4 5.5-0.5 1 0 1 0 1 0.5 1 4 5.5 2 3 3.5 8 1 1 1.5 1 11 3.5 2.5 0.5 2.5 0 7-1.5 5.5-1 6.5 0 2 0.5 1 0.5 0.5 1 0.5 1.5 0 6.5-1 6-1.5 7 0 2.5 0.5 2.5 3.5 11 1 1.5 1 1 8 3.5 3 2 5.5 4 1 0.5zM28.5 339l-0.5 0.5 0-0.5-2-2-1-2-1-2.5-1-2.5-0.5-2.5-0.5-6 0.5-5.5 0.5-1.5 0.5-1.5 0.5-1 1-0.5 1.5-0.5 1.5 0 2 0 2.5 0.5 2.5 1 2 0.5 4.5 3 3 2.5 2 2 0.5 0zM273.5 339l-0.5 0.5 0-0.5-2-2-1-2-1-2.5-1-2.5-0.5-2.5-0.5-6 0.5-5.5 0.5-1.5 0.5-1.5 0.5-1 1-0.5 1.5-0.5 1.5 0 2 0 2.5 0.5 2.5 1 2 0.5 4.5 3 3 2.5 2 2 0.5 0zM462 339.5l-19-19 0.5 0 2-2 3-2.5 4-2.5 2.5-1 2-1 2.5-0.5 2 0 3 0.5 1.5 0.5 0.5 1 0.5 1 0.5 1.5 0.5 4.5-0.5 6.5-1 5-1.5 3.5-1.5 2.5-1.5 1.5zM77 334.5l1.5-0.5 2.5-2 2.5-2 2.5-2.5 1.5-2 1.5-2 0.5-2 0-1.5-0.5-1.5-1.5-2-1.5-1.5-2.5-1.5-2.5-1-2.5-0.5-2.5-0.5-2.5 0.5-2 0.5-1.5 0.5-1 1-1 1-0.5 1.5-0.5 2-0.5 2 0.5 2.5 0.5 2.5 0.5 2 1 2 1.5 2 1.5 1.5 1.5 1 1.5 0.5zM123 334l-2 0-1.5-1-2-1-2-2-1.5-2-1.5-2.5-1-2-0.5-2 0-2 0.5-1.5 1-1.5 1-1.5 1.5-1 2-1 2-1 2 0 2.5 0 2.5 0 2 1 2 1 1.5 1 1 1.5 1 1.5 0.5 2 0 2-0.5 2-1 2-2 2.5-2 2.5-2 1.5-2 1zM170.5 334.5l1.5-0.5 2-2 1.5-2 1-2 1-2.5 0.5-3 0.5-2.5-0.5-2.5-0.5-1.5-1-1.5-1-1-1.5-1-2-0.5-2-0.5-2 0-2.5 0.5-2 0.5-2 1-2 1-1.5 1.5-1.5 1.5-1 1.5 0 1.5 0 1 0.5 2 2 2.5 2 2.5 3 3 2 1.5 2 1 2 0.5zM322 334.5l1.5-0.5 2.5-2 2.5-2 2.5-2.5 1.5-2 1.5-2 0.5-2 0-1.5-0.5-1.5-1.5-2-1.5-1.5-2.5-1.5-2.5-1-2.5-0.5-2.5-0.5-2.5 0.5-2 0.5-1.5 0.5-1 1-1 1-0.5 1.5-0.5 2-0.5 2 0.5 2.5 0.5 2.5 0.5 2 1 2 1.5 2 1.5 1.5 1.5 1 1.5 0.5zM368 334l-2 0-1.5-1-2-1-2-2-1.5-2-1.5-2.5-1-2-0.5-2 0-2 0.5-1.5 1-1.5 1-1.5 1.5-1 2-1 2-1 2 0 2.5 0 2.5 0 2 1 2 1 1.5 1 1 1.5 1 1.5 0.5 2 0 2-0.5 2-1 2-2 2.5-2 2.5-2 1.5-2 1zM415.5 334.5l1.5-0.5 2-2 1.5-2 1-2 1-2.5 0.5-3 0.5-2.5-0.5-2.5-0.5-1.5-1-1.5-1-1-1.5-1-2-0.5-2-0.5-2 0-2.5 0.5-2 0.5-2 1-2 1-1.5 1.5-1.5 1.5-1 1.5 0 1.5 0 1 0.5 2 2 2.5 2 2.5 3 3 2 1.5 2 1 2 0.5zM4.5 345l-4.5 0 0-22 1.5 0.5 1.5 1 2.5 2.5 2.5 2.5 2 2.5 1 2 1 2 0.5 2 0.5 1.5-0.5 1.5-0.5 1-1 1-1 0.5-1.5 1zM249.5 345l-3.5 0-3.5 0-3 0-2.5-0.5-2-1-1-0.5-1-1-0.5-1.5 0-2 0.5-2 0.5-2 1.5-2.5 2.5-3 3-3 2.5-2.5 1.5-0.5 1 0 1.5 0.5 2 2 2.5 2.5 2 2.5 2 2.5 1.5 2.5 0.5 2 0.5 1.5-0.5 1.5 0 1-1 1-1 1-1.5 0.5-2 0.5zM490 345l-5.5 0-2.5-0.5-1.5-0.5-1.5-1-1-1-0.5-1-0.5-1.5 0.5-2 0.5-2 1.5-2.5 2-2.5 2.5-3 2.5-2.5 2-1.5 1.5-0.5zM122.5 392l-2.5-0.5-8-1.5-8.5-1.5-1.5-0.5-0.5-1-0.5-2-1-7.5-2-8 0-2.5 0.5-2.5 1.5-7.5 1.5-8.5 0.5-1.5 1-0.5 2-0.5 7.5-1 8-2 2.5 0 2.5 0.5 7.5 1.5 8.5 1.5 1.5 0.5 0.5 1 0.5 2 1 7 1.5 8 0.5 2.5-0.5 2.5-1.5 8-1.5 8-0.5 1.5-0.5 0.5-1.5 0.5-8 1.5-8 1.5zM367.5 392l-2.5-0.5-8-1.5-8-1.5-1.5-0.5-0.5-0.5-0.5-1.5-1.5-8-1.5-8-0.5-2.5 0.5-2.5 1.5-8 1-7 0.5-2 0.5-1 1.5-0.5 8.5-1.5 7.5-1.5 2.5-0.5 2.5 0 8 2 7.5 1 2 0.5 1 0.5 0.5 1.5 1.5 8.5 1.5 7.5 0.5 2.5 0 2.5-2 8-1 7.5-0.5 2-0.5 1-1.5 0.5-8.5 1.5-8 1.5zM30 380l2-0.5 2-1 4.5-3.5 2.5-2.5 2-2 1-1.5 0.5-1.5-0.5-1.5-1.5-2-3-3-3-2.5-2.5-2-2.5-1-2-0.5-2 0-1.5 0-1 1-1 1-1 2-0.5 2.5 0 3.5 0 3.5 0 3.5 0.5 2.5 0.5 2 0.5 1.5 1 1 1 1 1 0 1.5 0.5zM218.5 380l1-0.5 1-1 1-1.5 0.5-1.5 0.5-3 0-3 0-6.5-0.5-4-1-1.5-0.5-1-1-1-1-0.5-1 0-1.5 0-2 0.5-2 0.5-2 1.5-2.5 1.5-3 3-2.5 2.5-1 1.5-0.5 1.5 0.5 1.5 2 2.5 3 3 3.5 3 2.5 1.5 2.5 1 2 0.5zM275 380l2-0.5 2-1 4.5-3.5 2.5-2.5 2-2 1-1.5 0.5-1.5-0.5-1.5-1.5-2-3-3-3-2.5-2.5-2-2.5-1-2-0.5-2 0-1.5 0-1 1-1 1-1 2-0.5 2.5 0 3.5 0 3.5 0 3.5 0.5 2.5 0.5 2 0.5 1.5 1 1 1 1 1 0 1.5 0.5zM463.5 380l1-0.5 1-1 1-1.5 0.5-1.5 0.5-3 0-3 0-6.5-0.5-4-1-1.5-0.5-1-1-1-1-0.5-1 0-1.5 0-2 0.5-2 0.5-2 1.5-2.5 1.5-3 3-2.5 2.5-1 1.5-0.5 1.5 0.5 1.5 2 2.5 3 3 3.5 3 2.5 1.5 2.5 1 2 0.5zM78 378.5l-2 0.5-1.5 0-2-0.5-1.5-1-1.5-1.5-1-1.5-1-2-0.5-2.5 0-2.5 0-2.5 0.5-2.5 1-2 1-1.5 1.5-1.5 1.5-1 2-0.5 2 0 2 0.5 2 1 2.5 1.5 2.5 2 2 2 1 2 0.5 1.5 0 1.5-0.5 1.5-0.5 1.5-1.5 2-2 2-2 1.5-2.5 1.5zM124 378.5l2-0.5 2-1 2-1.5 1-1.5 1-1.5 1-2 0.5-2 0-2-0.5-2-1-2-1-2-2-1.5-1.5-1-2-1-2-0.5-2 0-2 0.5-2 1-2 1-1.5 2-1 1.5-1 2-0.5 2 0 2 0.5 2 1 2 1 2 2 1.5 2 1.5 2 1 2 0zM171.5 378.5l-2 0.5-2-0.5-2-0.5-2.5-1-2.5-2-2.5-2.5-1-2-1-2 0-1.5 0.5-1.5 1-2 1.5-2 2-2 2.5-1.5 2.5-1.5 2-0.5 2 0 1.5 0.5 1.5 0.5 1.5 1 1.5 1.5 1 1.5 0.5 2 0.5 2 0 2 0 2.5-0.5 2.5-0.5 2-1 1.5-1.5 1.5-1.5 1zM323 378.5l-2 0.5-1.5 0-2-0.5-1.5-1-1.5-1.5-1-1.5-1-2-0.5-2.5 0-2.5 0-2.5 0.5-2.5 1-2 1-1.5 1.5-1.5 1.5-1 2-0.5 2 0 2 0.5 2 1 2.5 1.5 2.5 2 2 2 1 2 0.5 1.5 0 1.5-0.5 1.5-0.5 1.5-1.5 2-2 2-2 1.5-2.5 1.5zM369 378.5l2-0.5 2-1 2-1.5 1-1.5 1-1.5 1-2 0.5-2 0-2-0.5-2-1-2-1-2-2-1.5-1.5-1-2-1-2-0.5-2 0-2 0.5-2 1-2 1-1.5 2-1 1.5-1 2-0.5 2 0 2 0.5 2 1 2 1 2 2 1.5 2 1.5 2 1 2 0zM416.5 378.5l-2 0.5-2-0.5-2-0.5-2.5-1-2.5-2-2.5-2.5-1-2-1-2 0-1.5 0.5-1.5 1-2 1.5-2 2-2 2.5-1.5 2.5-1.5 2-0.5 2 0 1.5 0.5 1.5 0.5 1.5 1 1.5 1.5 1 1.5 0.5 2 0.5 2 0 2 0 2.5-0.5 2.5-0.5 2-1 1.5-1.5 1.5-1.5 1zM0 412l0-22 6 0 2.5 0.5 1.5 1 1.5 1 1 1 0 1 0 2.5-1 3-2.5 4-3.5 4-3.5 3.5-1 0.5zM245 412l-1.5-0.5-2.5-2-3.5-3.5-2.5-3.5-1.5-2.5-1-2.5-0.5-2 0.5-2 1.5-1.5 1.5-1 2-0.5 3-0.5 4 0 4.5 0 3.5 0.5 2.5 1 1.5 1 1 1 0 1 0 2.5-1 3-2.5 4-3.5 4-3.5 3.5-1 0.5zM490 412l-1 0-1-0.5-3.5-3.5-3.5-4-2.5-4-1-3 0-2.5 0-1 1-1 1.5-1 1.5-1 2.5-0.5 6 0zM32 423.5l-4 0.5-1.5 0-1.5-0.5-1-0.5-0.5-1-0.5-1.5-0.5-1.5 0-3 0-4 0-4 0.5-3 1-3 1-2 1.5-2.5 1.5-1.5 0-0.5 19 19-0.5 0-3.5 3.5-4 2.5-3.5 2zM464.5 423.5l-2 0.5-3 0-3-1-2.5-1-2.5-1-2.5-1.5-3-2.5-2.5-2.5-0.5 0 19-19 0 0.5 1 1 1.5 2 1.5 3 1 3.5 0.5 4 0.5 6-0.5 4.5-0.5 1.5-0.5 1-1 0.5zM79 423l2.5-0.5 2-1 2-1 1.5-1.5 1.5-1.5 1-1.5 0-1.5 0-1-0.5-2-1.5-2-2-2.5-3-3-2-1.5-2-1.5-2-0.5-1.5 0-1.5 0.5-2 1.5-1.5 1.5-1.5 2.5-1 2.5-0.5 2.5-0.5 3 0.5 2.5 0.5 1.5 0.5 1.5 1 1 1.5 1.5 2 0.5 2 0.5 2.5 0zM172.5 423l1.5-0.5 1.5-1 1-1 1-1 0.5-1.5 0-2 0.5-2-0.5-2.5-0.5-2.5-1-2-1-2-1-1.5-1.5-1.5-1.5-1-1.5-0.5-1.5 0-2 0.5-2 1.5-2.5 2-3 3-1.5 2-1.5 2-0.5 2 0 1.5 0.5 1.5 1.5 2 2 2 2.5 1 2.5 1 3 0.5 2.5 0.5zM324 423l2.5-0.5 2-1 2-1 1.5-1.5 1.5-1.5 1-1.5 0-1.5 0-1-0.5-2-1.5-2-2-2.5-3-3-2-1.5-2-1.5-2-0.5-1.5 0-1.5 0.5-2 1.5-1.5 1.5-1.5 2.5-1 2.5-0.5 2.5-0.5 3 0.5 2.5 0.5 1.5 0.5 1.5 1 1 1.5 1.5 2 0.5 2 0.5 2.5 0zM417.5 423l1.5-0.5 1.5-1 1-1 1-1 0.5-1.5 0-2 0.5-2-0.5-2.5-0.5-2.5-1-2-1-2-1-1.5-1.5-1.5-1.5-1-1.5-0.5-1.5 0-2 0.5-2 1.5-2.5 2-3 3-1.5 2-1.5 2-0.5 2 0 1.5 0.5 1.5 1.5 2 2 2 2.5 1 2.5 1 3 0.5 2.5 0.5zM124.5 423l-2.5 0-2.5 0-2-0.5-2-1-1.5-1-1.5-1.5-1-1.5-0.5-2 0-2 0.5-2 1-2 1.5-2.5 2-2.5 2-2 2-1 2-0.5 2 0 1.5 1 2 1 2 2 1.5 2 1.5 2.5 1 2 0.5 2 0 2-0.5 1.5-1 1.5-1 1.5-1.5 1-1.5 1-2 0.5zM369.5 423l-2.5 0-2.5 0-2-0.5-2-1-1.5-1-1.5-1.5-1-1.5-0.5-2 0-2 0.5-2 1-2 1.5-2.5 2-2.5 2-2 2-1 2-0.5 2 0 1.5 1 2 1 2 2 1.5 2 1.5 2.5 1 2 0.5 2 0 2-0.5 1.5-1 1.5-1 1.5-1.5 1-1.5 1-2 0.5zM73 490l-17.5 0 0-2.5-0.5-2-0.5-2-1-1.5-1.5-1.5-1.5-1-1.5-0.5-2-0.5-2 0.5-2 0.5-2.5 1-2 1.5-2.5 2.5-1.5 2-1 2 0 1.5-9 0-0.5-2.5-1.5-8-1.5-8 0-1-0.5-1-1-0.5-1 0-8-1.5-8-1.5-2.5-0.5 0-9 1.5 0 2-1 2-1.5 2.5-2.5 1.5-2 1-2.5 0.5-2 0.5-2-0.5-2-0.5-1.5-1-1.5-1.5-1.5-1.5-1-2-0.5-2-0.5-2.5 0 0-18 1 0 1 0.5 5.5 4 3 2 8 3.5 1 1 1 1.5 3.5 11 0.5 2.5 0 2.5-1.5 7-1 5.5 0 6.5 0.5 2 0.5 1 1 0.5 1.5 0.5 6.5 0 6-1 7-1.5 2.5 0 2.5 0.5 11 3.5 1.5 1 1 1 2.5 6 1.5 2.5 5.5 8.5 0.5 1.5zM318.5 490l-18 0 0-2.5-0.5-2-0.5-2-1-1.5-1.5-1.5-1.5-1-1.5-0.5-2-0.5-2 0.5-2 0.5-2.5 1-2 1.5-2.5 2.5-1.5 2-1 2 0 1.5-9 0-0.5-2.5-1.5-8-1.5-8 0-1-0.5-1-1-0.5-1 0-8-1.5-8-1.5-2.5-0.5-2.5 0.5-8 1.5-8 1.5-1 0-1 0.5-0.5 1 0 1-1.5 8-1.5 8-0.5 2.5-9 0 0-1.5-1-2-1.5-2-2.5-2.5-2-1.5-2.5-1-2-0.5-2-0.5-2 0.5-1.5 0.5-1.5 1-1.5 1.5-1 1.5-0.5 2-0.5 2 0 2.5-18 0 0-1 0.5-1 4-5.5 2-3 3.5-8 1-1 1.5-1 11-3.5 2.5-0.5 2.5 0 7 1.5 5.5 1 6.5 0 2-0.5 1-0.5 0.5-1 0.5-1.5 0-6.5-1-6-1.5-7 0-2.5 0.5-2.5 3.5-11 1-1.5 1-1 8-3.5 3-2 5.5-4 1-0.5 1 0 1 0 1 0.5 5.5 4 3 2 8 3.5 1 1 1 1.5 3.5 11 0.5 2.5 0 2.5-1.5 7-1 5.5 0 6.5 0.5 2 0.5 1 1 0.5 1.5 0.5 6.5 0 6-1 7-1.5 2.5 0 2.5 0.5 11 3.5 1.5 1 1 1 3.5 8 2 3 4 5.5 0.5 1zM465 490l-8.5 0 0-1.5-1-2-1.5-2-2.5-2.5-2-1.5-2.5-1-2-0.5-2-0.5-2 0.5-1.5 0.5-1.5 1-1.5 1.5-1 1.5-0.5 2-0.5 2 0 2.5-18 0 0-1 0.5-1 4-5.5 2-3 3.5-8 1-1 1.5-1 11-3.5 2.5-0.5 2.5 0 7 1.5 5.5 1 6.5 0 2-0.5 1-0.5 0.5-1 0.5-1.5 0-6.5-1-6-1.5-7 0-2.5 0.5-2.5 3.5-11 1-1.5 1-1 8-3.5 3-2 5.5-4 1-0.5 1 0 0 18-2.5 0-2 0.5-2 0.5-1.5 1-1.5 1.5-1 1.5-0.5 1.5-0.5 2 0.5 2 0.5 2 1 2.5 1.5 2 2.5 2.5 2 1.5 2 1 1.5 0 0 9-2.5 0.5-8 1.5-8 1.5-1 0-1 0.5-0.5 1 0 1-1.5 8-1.5 8-0.5 2.5zM47.5 457l-1.5 0-2-0.5-2-1.5-2.5-2-3-3-2-2.5-1-2-0.5-2 0-1.5 0.5-1.5 1.5-1.5 1.5-1.5 2-1 2-1 2-1 2.5 0 2-0.5 2 0.5 2 0.5 1.5 0.5 1 1 1.5 1.5 0.5 1.5 0 2 0.5 2.5-0.5 2.5-0.5 2.5-1.5 2.5-1.5 2.5-1.5 1.5-1.5 1zM199 457l-1.5 0-1.5-0.5-1.5-1-1.5-1.5-1.5-2-1-2-1-2.5 0-2.5-0.5-2 0.5-2 0.5-2 0.5-1.5 1-1 1.5-1.5 1.5-0.5 2 0 2.5-0.5 2.5 0.5 2.5 0.5 2.5 1.5 2.5 1.5 1.5 1.5 1 1.5 0.5 1.5 0 1.5-0.5 2-1.5 2-1.5 2-3 3-2.5 2-2 1.5zM246 456.5l2-1 2-1 2-2 2-2.5 1.5-2.5 0.5-2 0.5-2 0-2-1-2-1-1.5-1.5-1.5-1.5-1-2-0.5-2.5-0.5-2.5 0-2.5 0-2 0.5-2 1-1.5 1-1.5 1.5-1 1.5-0.5 1.5 0 1.5 0.5 2 0.5 2 1 2.5 1.5 2 2 2 2 1.5 1.5 1 2 0.5zM292.5 457l-1.5 0-2-0.5-2-1.5-2.5-2-3-3-2-2.5-1-2-0.5-2 0-1.5 0.5-1.5 1.5-1.5 1.5-1.5 2-1 2-1 2-1 2.5 0 2-0.5 2 0.5 2 0.5 1.5 0.5 1 1 1.5 1.5 0.5 1.5 0 2 0.5 2.5-0.5 2.5-0.5 2.5-1.5 2.5-1.5 2.5-1.5 1.5-1.5 1zM444 457l-1.5 0-1.5-0.5-1.5-1-1.5-1.5-1.5-2-1-2-1-2.5 0-2.5-0.5-2 0.5-2 0.5-2 0.5-1.5 1-1 1.5-1.5 1.5-0.5 2 0 2.5-0.5 2.5 0.5 2.5 0.5 2.5 1.5 2.5 1.5 1.5 1.5 1 1.5 0.5 1.5 0 1.5-0.5 2-1.5 2-1.5 2-3 3-2.5 2-2 1.5zM81 467.5l-6 0.5-5-0.5-1.5-0.5-1-0.5-0.5-1-1-1.5 0-2.5 0.5-2.5 0.5-2.5 1-2.5 1-2.5 1.5-2.5 2.5-3 2.5-2.5 0-0.5 19 19-0.5 0-1 1-2 1.5-2.5 1.5-3.5 1zM174 467.5l-3 0-4 0-4 0-3-0.5-3-1-2-1-2.5-1.5-1.5-1.5-0.5 0 19-19 0 0.5 4 4.5 2.5 3.5 1.5 3.5 1 3.5 0.5 3.5 0 1.5-0.5 1.5-0.5 1-1 0.5-1.5 0.5zM326 467.5l-6 0.5-5-0.5-1.5-0.5-1-0.5-0.5-1-1-1.5 0-2.5 0.5-2.5 0.5-2.5 1-2.5 1-2.5 1.5-2.5 2.5-3 2.5-2.5 0-0.5 19 19-0.5 0-1 1-2 1.5-2.5 1.5-3.5 1zM419 467.5l-3 0-4 0-4 0-3-0.5-3-1-2-1-2.5-1.5-1.5-1.5-0.5 0 19-19 0 0.5 4 4.5 2.5 3.5 1.5 3.5 1 3.5 0.5 3.5 0 1.5-0.5 1.5-0.5 1-1 0.5-1.5 0.5zM127 467.5l2.5-0.5 2-0.5 1.5-0.5 1-1 1-1 0-1 0.5-1.5-0.5-1.5-0.5-2-1.5-2.5-2-2.5-2-2.5-2.5-2.5-2-2-1.5-0.5-1 0-1.5 0.5-2.5 2.5-3 3-2.5 3-1.5 2.5-0.5 2-0.5 2 0 2 0.5 1.5 1 1 1 0.5 2 1 2.5 0.5 3 0 3.5 0zM372 467.5l2.5-0.5 2-0.5 1.5-0.5 1-1 1-1 0-1 0.5-1.5-0.5-1.5-0.5-2-1.5-2.5-2-2.5-2-2.5-2.5-2.5-2-2-1.5-0.5-1 0-1.5 0.5-2.5 2.5-3 3-2.5 3-1.5 2.5-0.5 2-0.5 2 0 2 0.5 1.5 1 1 1 0.5 2 1 2.5 0.5 3 0 3.5 0zM100 490l-22 0 0.5-1.5 1.5-2 2.5-2.5 3-2.5 2.5-2 2.5-1.5 2-0.5 2-0.5 1.5 0.5 1 0.5 1 1 1 1.5 0.5 2 0.5 2.5 0 4.5zM167 490l-22 0 0-6 0.5-2.5 1-1.5 1-1.5 1-1 1 0 2.5 0 3 1 4 2.5 4 3.5 3.5 3.5 0.5 1zM345 490l-22 0 0.5-1.5 1.5-2 2.5-2.5 3-2.5 2.5-2 2.5-1.5 2-0.5 2-0.5 1.5 0.5 1 0.5 1 1 1 1.5 0.5 2 0.5 2.5 0 4.5zM412 490l-22 0 0-6 0.5-2.5 1-1.5 1-1.5 1-1 1 0 2.5 0 3 1 4 2.5 4 3.5 3.5 3.5 0.5 1zM11 490l-11 0 0-11 2 0 2 1 2 1 2 1.5 1 1.5 1 2 1 2.5zM256 490l-22 0 0-2 1-2 1-2 1-1.5 2-1.5 2-1 2-1 2 0 2 0 2 1 2 1 2 1.5 1 1.5 1 2 1 2.5zM490 490l-11 0 0-2 1-2 1-2 1-1.5 2-1.5 2-1 2-1 2 0z"/><clipPath id="cr"><use href="#pp"/></clipPath><pattern id="st" width="3.2" height="8" patternUnits="userSpaceOnUse"><rect x="0" y="0" width="2.2" height="8" fill="#fff" fill-opacity=".12"/></pattern></defs>
<rect x="0" y="0" width="490" height="490" fill="#97ff20"/>
<use href="#pp" fill="#de0b53"/>
<rect x="0" y="0" width="490" height="490" fill="url(#st)"/>
<!-- faint axes + labels through plot -->
<rect x="0" y="244.5" width="490" height="1" fill="#d8ff90" fill-opacity=".35"/>
<rect x="244.5" y="0" width="1" height="490" fill="#d8ff90" fill-opacity=".3"/>
<g clip-path="url(#cr)"><rect x="0" y="244.5" width="490" height="1" fill="#d4004a"/><rect x="244.5" y="0" width="1" height="490" fill="#da0850"/></g>
<g font-family="Liberation Sans" font-size="9.5" fill="#000" fill-opacity=".13" text-anchor="end">
<text x="242" y="63.7">30</text><text x="242" y="125">20</text><text x="242" y="186.2">10</text><text x="242" y="308.7">-10</text><text x="242" y="370">-20</text><text x="242" y="431.2">-30</text>
</g>
<g font-family="Liberation Sans" font-size="9.5" fill="#000" fill-opacity=".13" text-anchor="middle">
<text x="5" y="257">40</text><text x="60.5" y="257">-30</text><text x="121.7" y="257">-20</text><text x="183" y="257">-10</text><text x="249.5" y="257">0</text><text x="306.2" y="257">10</text><text x="367.5" y="257">20</text><text x="428.7" y="257">30</text><text x="484" y="257">4</text>
</g>
<g fill="none" stroke="#f00" stroke-width="3.7"><circle cx=".5" cy="0" r="6.9"/><circle cx="490.5" cy="0" r="6.9"/><circle cx=".5" cy="490" r="6.9"/><circle cx="490.5" cy="490" r="6.9"/></g>
<rect x="0" y="0" width="490" height="490" fill="none" stroke="#ffa400" stroke-width="1"/>
<path d="M-4.2 0H5.2M.5-4.7V4.7M485.8 0H495.2M490.5-4.7V4.7M-4.2 490H5.2M.5 485.3V494.7M485.8 490H495.2M490.5 485.3V494.7" stroke="#00f" stroke-width="2.1"/>
</svg>

<!-- ===== left controls ===== -->
<div class="a" style="left:8px;top:150px;font-size:11px;color:#34a834">L =:</div>
<div class="a inp" style="left:27px;top:145px;width:21px;height:18px;color:#34a834">20</div>
<div class="a" style="left:71px;top:138px;font-size:11.5px;color:#34a834">L = 20</div>
<div class="a sl" style="left:55px;top:153px;width:41px;height:2px;background:#0a960a"></div>
<div class="a dot" style="left:77.5px;top:150.5px;width:7px;height:7px;background:#0a8a0a"></div>
<div class="a" style="left:100px;top:150px;font-size:11px;letter-spacing:.3px;color:#8a2aa0">s =:</div>
<div class="a inp" style="left:119px;top:144px;width:21px;height:18px;color:#7a1a90">1</div>
<div class="a btn" style="left:143px;top:145px;width:19px;height:18px;padding-top:4px">-1</div>
<div class="a btn" style="left:165px;top:145px;width:19px;height:18px;padding-top:4px">0</div>
<div class="a btn" style="left:187px;top:145px;width:19px;height:18px;padding-top:4px">1</div>

<div class="a" style="left:5px;top:177px;font-size:11px;color:#1a1aff">m =:</div>
<div class="a inp" style="left:27px;top:172px;width:21px;height:18px;color:#1a1aff">3</div>
<div class="a btn" style="left:63px;top:172px;width:28px;height:18px;padding-top:4px;color:#1a1aff">m=1</div>
<div class="a btn" style="left:116px;top:172px;width:19px;height:18px"><svg width="17" height="16" viewBox="0 0 17 16"><path d="M12 3.5V12L5 7.7z" fill="#00f"/></svg></div>
<div class="a" style="left:146.5px;top:170px;font-size:11px;color:#1a1aff">3</div>
<div class="a sl" style="left:140px;top:182px;width:41px;background:#1a1aff"></div>
<div class="a dot" style="left:145px;top:179.5px;background:#00c"></div>
<div class="a btn" style="left:185px;top:172px;width:19px;height:18px"><svg width="17" height="16" viewBox="0 0 17 16"><path d="M5.5 3.5V12L12.5 7.7z" fill="#00f"/></svg></div>

<div class="a" style="left:6px;top:204px;font-size:11px;letter-spacing:.3px;color:#f01818">n =:</div>
<div class="a inp" style="left:25px;top:199px;width:21px;height:18px;color:#f01818">8</div>
<div class="a btn" style="left:64px;top:199px;width:25px;height:18px;padding-top:4px;color:#f01840">n=1</div>
<div class="a btn" style="left:115px;top:199px;width:19px;height:18px"><svg width="17" height="16" viewBox="0 0 17 16"><path d="M12 3.5V12L5 7.7z" fill="#f00"/></svg></div>
<div class="a" style="left:157.5px;top:197px;font-size:11px;color:#1a1aff">8</div>
<div class="a sl" style="left:139px;top:209px;width:41px;background:#1a1aff"></div>
<div class="a dot" style="left:158px;top:206.5px;background:#00c"></div>
<div class="a btn" style="left:184px;top:199px;width:19px;height:18px"><svg width="17" height="16" viewBox="0 0 17 16"><path d="M5.5 3.5V12L12.5 7.7z" fill="#f00"/></svg></div>

<!-- green info panel -->
<div class="a" style="left:12px;top:254px;width:210px;height:135px;background:#ccffcc"></div>
<div class="a" style="left:15px;top:265px;width:2px;height:1px;background:#f66"></div>
<div class="a" style="left:217px;top:265px;width:2px;height:1px;background:#f66"></div>
<div class="a" style="left:15px;top:380px;width:2px;height:1px;background:#f66"></div>
<div class="a bi" style="left:46px;top:260px;color:#0a0aee">Bildschirmausschnitt:</div>
<div class="a bi" style="left:46px;top:276px;letter-spacing:.08px;color:#0a0aee">(blaue Punkte bewegen)</div>
<div class="a bi" style="left:48px;top:300px;color:#18a0d0">xmin = -40</div>
<div class="a bi" style="left:118px;top:300px;color:#18a0d0">xmax = 40</div>
<div class="a bi" style="left:47px;top:316px;color:#18a0d0">ymin = -40</div>
<div class="a bi" style="left:114px;top:316px;color:#18a0d0">ymax = 40</div>
<div class="a bi" style="left:31px;top:339px;font-size:11.3px;color:#0a6a9c">Ausschnitt -Varianten:</div>
<div class="a btn" style="left:29px;top:360px;width:19px;height:18px;padding-top:5px;font-size:9.2px;color:#0a0aff">1</div>
<div class="a btn" style="left:51px;top:360px;width:19px;height:18px;padding-top:5px;font-size:9.2px;color:#0a0aff">2</div>
<div class="a btn" style="left:73px;top:360px;width:19px;height:18px;padding-top:5px;font-size:9.2px;color:#0a0aff">3</div>
<div class="a btn" style="left:95px;top:360px;width:19px;height:18px;padding-top:5px;font-size:9.2px;color:#7a7aff">4</div>
<div class="a btn" style="left:117px;top:360px;width:19px;height:18px;padding-top:5px;font-size:9.2px;color:#000">5</div>
<div class="a btn" style="left:139px;top:360px;width:19px;height:18px;padding-top:5px;font-size:9.2px;color:#0a0aff">6</div>
<div class="a btn" style="left:161px;top:360px;width:19px;height:18px;padding-top:5px;font-size:9.2px;color:#0a0aff">7</div>
<div class="a btn" style="left:187px;top:360px;width:22px;height:18px;padding-top:4px;color:#0a0aff;font-size:9.5px;letter-spacing:-.3px;padding-top:4px">II<span style="font-size:12.5px;line-height:0;position:relative;top:.5px">&#8592;</span></div>

<!-- Methode: Roots -->
<div class="a" style="left:59px;top:425px;width:112px;height:22px;background:#ff0"></div>
<div class="a bi" style="left:63px;top:429px;font-size:13px;letter-spacing:.1px">Methode : Roots</div>
<div class="a" style="left:26px;top:448px;width:192px;height:185px;background:#afeeee"></div>
<div class="a bi" style="left:35px;top:458px">Auflösung:</div>
<div class="a" style="left:98px;top:458px;font-size:11px">N<sub class="b" style="font-size:64%;top:2.5px">P</sub>(&#8804;1000) =:</div>
<div class="a inp" style="left:165px;top:457px;width:30px;height:18px;padding-top:3px">200</div>
<div class="a cb" style="left:201px;top:460px"></div>
<div class="a cb on" style="left:32px;top:483px"></div>
<div class="a b" style="left:50px;top:482px;color:#0a0ae0">x - Scan:</div>
<div class="a bi" style="left:112px;top:482px;color:#0a0ae0">Länge = 84</div>
<div class="a cb on" style="left:32px;top:505px"></div>
<div class="a b" style="left:50px;top:504px;color:#f03030">y - Scan:</div>
<div class="a bi" style="left:110px;top:503px;color:#f03030">Länge = 84</div>
<div class="a bi" style="left:33px;top:532px">Setzen der Punkteigenschaften:</div>
<div class="a" style="left:144px;top:556px;font-size:11px">q = 2</div>
<div class="a" style="left:121px;top:573px;width:63px;height:1px;background:#000"></div>
<div class="a dot" style="left:149px;top:570px;width:6px;height:6px;background:#000"></div>
<div class="a btn" style="left:32px;top:564px;width:66px;height:18px;padding-top:4px">Größe setzen</div>
<div class="a btn" style="left:32px;top:599px;width:59px;height:18px;padding-top:4px">Spur setzen</div>
<div class="a cb on" style="left:111px;top:604px"></div>
<div class="a" style="left:124px;top:604px;font-size:11px">Spur</div>
<div class="a btn" style="left:161px;top:598px;width:39px;height:18px;padding-top:4px">refresh</div>


<!-- ===== right: Ausschnitt Hintergrund ===== -->
<div class="a" style="left:831px;top:158px;width:119px;height:136px;background:#e6e0fa"></div>
<div class="a b" style="left:852px;top:162px;color:#8000ff">Ausschnitt</div>
<div class="a b" style="left:852px;top:179px;letter-spacing:.2px;color:#8000ff">Hintergrund:</div>
<div class="a" style="left:841px;top:195px;color:#f02020">rot = 0.15</div>
<div class="a sl" style="left:862px;top:209px;width:33px;background:#f02020"></div>
<div class="a dot" style="left:864px;top:207px;width:5.5px;height:5.5px;margin:.25px;background:#e01010"></div>
<div class="a" style="left:875px;top:218px;color:#146414">grün = 1</div>
<div class="a sl" style="left:866px;top:233px;width:34px;background:#22963c"></div>
<div class="a dot" style="left:894px;top:230px;width:5.5px;height:5.5px;margin:.25px;background:#146e14"></div>
<div class="a" style="left:853px;top:242px;color:#1a1aff">blau = 0</div>
<div class="a sl" style="left:866px;top:256px;width:35px;background:#1a1aff"></div>
<div class="a dot" style="left:865px;top:254px;width:5.5px;height:5.5px;margin:.25px;background:#0000b4"></div>
<div class="a" style="left:833px;top:266px;color:#8a3cf0">Deckkraft = 0</div>
<div class="a sl" style="left:866px;top:280px;width:36px;background:#8a2cf0"></div>
<div class="a dot" style="left:866px;top:278px;width:6px;height:6px;background:#6414b4;box-shadow:0 0 0 1.5px rgba(138,60,240,.35)"></div>

<!-- Plottfarben -->
<div class="a" style="left:751px;top:316px;width:225px;height:102px;background:#e6e0fa"></div>
<div class="a b" style="left:753px;top:319px;color:#8000ff;letter-spacing:.15px">Plottfarben:</div>
<div class="a" style="left:759px;top:351px;width:15px;height:15px;border-radius:50%;background:#e6104d;border:1px solid #222"></div>
<div class="a" style="left:759px;top:381px;width:15px;height:15px;border-radius:50%;background:#99ff1a;border:1px solid #222"></div>
<div class="a" style="left:788px;top:341px;color:#f02020">Fr<sub>x</sub> = 0.9</div>
<div class="a sl" style="left:790px;top:359px;width:32px;background:#f02020"></div>
<div class="a dot" style="left:817px;top:357px;width:5.5px;height:5.5px;margin:.25px;background:#e01010"></div>
<div class="a" style="left:840px;top:341px;color:#1e9632">Fg<sub>x</sub> = 0</div>
<div class="a sl" style="left:848px;top:358px;width:33px;background:#22963c"></div>
<div class="a dot" style="left:847px;top:356px;width:5.5px;height:5.5px;margin:.25px;background:#146e14"></div>
<div class="a" style="left:896px;top:338px;color:#1a1aff">Fb<sub>x</sub> = 0.3</div>
<div class="a sl" style="left:906px;top:358px;width:33px;background:#1a1aff"></div>
<div class="a dot" style="left:913px;top:356px;width:5.5px;height:5.5px;margin:.25px;background:#0000b4"></div>
<div class="a" style="left:786px;top:393px;color:#f02020">Fr<sub>y</sub> = 0.6</div>
<div class="a sl" style="left:788px;top:387px;width:33px;background:#f02020"></div>
<div class="a dot" style="left:805px;top:385px;width:5.5px;height:5.5px;margin:.25px;background:#e01010"></div>
<div class="a" style="left:854px;top:392px;color:#1e9632">Fg<sub>y</sub> = 1</div>
<div class="a sl" style="left:852px;top:385px;width:34px;background:#22963c"></div>
<div class="a dot" style="left:881px;top:383px;width:5.5px;height:5.5px;margin:.25px;background:#146e14"></div>
<div class="a" style="left:900px;top:393px;color:#1a1aff">Fb<sub>y</sub> = 0.1</div>
<div class="a sl" style="left:907px;top:385px;width:33px;background:#1a1aff"></div>
<div class="a dot" style="left:908px;top:383px;width:5.5px;height:5.5px;margin:.25px;background:#0000b4"></div>

<!-- Methode: RootsByLocus -->
<div class="a" style="left:778px;top:425px;width:171px;height:24px;background:#ff0"></div>
<div class="a bi" style="left:782px;top:429px;font-size:13px;letter-spacing:.35px">Methode : <span style="color:#f00">R</span>oots<span style="color:#f00">B</span>y<span style="color:#f00">L</span>ocus</div>
<div class="a" style="left:755px;top:450px;width:220px;height:184px;background:#afeeee"></div>
<div class="a bi" style="left:768px;top:457px">I. Spurplot</div>
<div class="a cb" style="left:852px;top:457px"></div>
<div class="a" style="left:866px;top:457px">a/b</div>
<div class="a" style="left:771px;top:481px">b) Regionsfärbung:</div>
<div class="a" style="left:779px;top:499px;width:75px;height:18px;background:#c0c0c0"></div>
<div class="a" style="left:779.5px;top:502px;font-size:11.5px;color:#222">N<sub>V1</sub>(&#8804; 1000) =:</div>
<div class="a inp" style="left:854px;top:499px;width:38px;height:19px;padding-top:4px">800</div>
<div class="a" style="left:902px;top:500px;width:19px;height:18px;background:#f00000;border:1px solid #7a1010;border-radius:3px"><svg class="a" style="left:0;top:0" width="17" height="16" viewBox="0 0 17 16"><path d="M5.5 3.5V12.5L12.5 8z" fill="#000"/></svg></div>
<div class="a" style="left:930px;top:500px;width:18px;height:18px;background:linear-gradient(#b4e6fb,#62c4f2);border:1px solid #4a86a8;border-radius:3px;color:#00f;font-size:10px;text-align:center;padding-top:4px">x</div>
<div class="a bi" style="left:771px;top:525px">II. Feste Linien</div>
<div class="a" style="left:779.5px;top:552px;font-size:11.3px;color:#222">N<sub>V2</sub>(&#8804; 400) =:</div>
<div class="a inp" style="left:848px;top:549px;width:30px;height:19px;padding-top:4px">150</div>
<div class="a" style="left:903px;top:550px;width:19px;height:18px;background:#f00000;border:1px solid #7a1010;border-radius:3px"><svg class="a" style="left:0;top:0" width="17" height="16" viewBox="0 0 17 16"><path d="M5.5 3.5V12.5L12.5 8z" fill="#000"/></svg></div>
<div class="a" style="left:930px;top:550px;width:19px;height:18px;background:linear-gradient(#b4e6fb,#62c4f2);border:1px solid #4a86a8;border-radius:3px;color:#00f;font-size:10px;text-align:center;padding-top:4px">x</div>
<div class="a cb on" style="left:766px;top:588px"></div>
<div class="a" style="left:779px;top:587px;color:#1a1aff">x Scan</div>
<div class="a cb on" style="left:766px;top:607px"></div>
<div class="a" style="left:779px;top:607px;color:#e0206a">y Scan</div>
<div class="a bi" style="left:832.5px;top:596px">Genauigkeit:</div>
<div class="a" style="left:928px;top:587px">&#949; = 0.5</div>
<div class="a" style="left:917px;top:601px;width:40px;height:1px;background:#000"></div>
<div class="a dot" style="left:934px;top:598px;width:6px;height:6px;background:#000"></div>
<div class="a b" style="left:757.5px;top:663.5px;color:#5c5cff;font-size:14px">&#169;</div><div class="a bi" style="left:776px;top:665px;color:#5c5cff;letter-spacing:.75px">Roman Chijner,&nbsp; Heidelberg 2013</div>
<div class="a bi" style="left:776px;top:680px;color:#5c5cff;letter-spacing:.25px">Gestaltungshilfe : Werner Knobloch</div>


</div>

</div>

<div class="a" style="left:3px;top:738px;width:993px;height:1px;background:#8e8b85"></div>
<div class="a" style="left:3px;top:739px;width:993px;height:1px;background:#f4f2ee"></div>
<div class="a" style="left:11px;top:746px;font-size:11px">Eingabe:</div>
<div class="a" style="left:56px;top:741px;width:892px;height:19px;background:#fff;border:1px solid;border-color:#404040 #e8e6e0 #e8e6e0 #404040;box-shadow:inset 1px 1px 0 #808080"></div>
<div class="a" style="left:962px;top:744px;width:12px;height:11px;border:1px solid #555;border-radius:2px;background:#e8e6e2"><svg class="a" style="left:0;top:0" width="10" height="9" viewBox="0 0 10 9"><path d="M6.5 2V7L3 4.5z" fill="#222"/></svg></div>

</div></body></html>
